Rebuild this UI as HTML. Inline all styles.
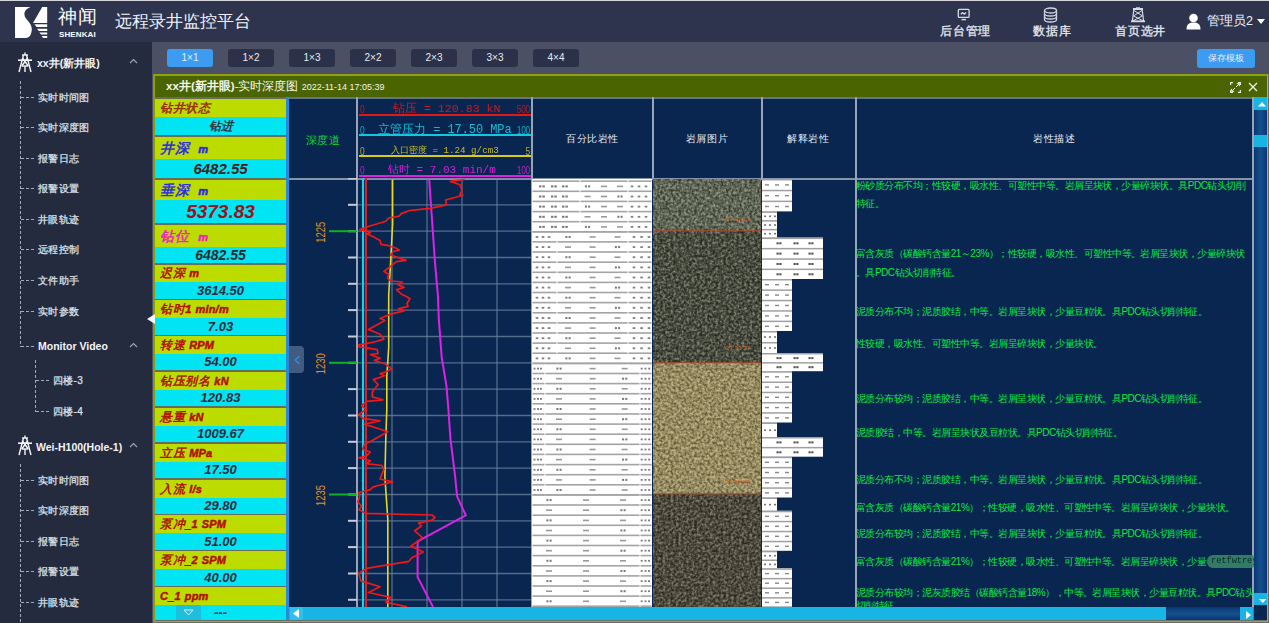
<!DOCTYPE html><html><head><meta charset="utf-8"><style>
*{margin:0;padding:0;box-sizing:border-box}
html,body{width:1269px;height:623px;overflow:hidden;background:#252b3f;font-family:"Liberation Sans",sans-serif}
div,span,svg{position:absolute}
.btn{top:49px;width:46px;height:18px;background:#2b3149;border-radius:3px;color:#e8ecf4;font-size:10px;line-height:18px;text-align:center}
.btn.on{background:#3c9cf2}
.navt{-webkit-text-stroke:0.3px #e6eaf2;color:#e6eaf2;font-size:12px;top:24px;letter-spacing:0.8px;height:14px;line-height:14px;white-space:nowrap}
.si{-webkit-text-stroke:0.25px #dfe3ea;color:#dfe3ea;font-size:10px;letter-spacing:0.3px;white-space:nowrap;line-height:12px;height:12px}
.sb{color:#f2f4f8;font-size:10.5px;font-weight:bold;white-space:nowrap;line-height:12px;height:12px}
.hd{height:1px;background:repeating-linear-gradient(90deg,#a4aab8 0 3px,transparent 3px 5px)}
.vd{width:1px;background:repeating-linear-gradient(180deg,#a4aab8 0 3px,transparent 3px 5px)}
.lab{left:0;width:131px;height:18px;background:#bcdc00;font-style:italic;font-size:12px;line-height:18px;padding-left:5px;color:#a01010;white-space:nowrap;letter-spacing:0.6px}
.val{left:0;width:131px;background:#00e4f4;font-style:italic;font-weight:bold;font-size:13px;text-align:center;color:#2a2a3a;white-space:nowrap}
.ch{color:#e8ecf4;font-size:9.5px;letter-spacing:0.6px;white-space:nowrap;text-align:center}
.desc{color:#08ec3c;font-size:10px;letter-spacing:-0.52px;white-space:nowrap;line-height:12px;height:12px;left:856px}
</style></head><body>
<div style="left:0;top:0;width:1269px;height:42px;background:#2e344e;border-top:1px solid #d4d6dc"></div>
<svg style="left:0;top:0" width="60" height="42" viewBox="0 0 60 42">
<path d="M15 7 H30.5 C26.5 8.5 24 11.5 24.5 15 C25 19.5 31.8 22.5 31.8 29 C31.8 34 29.5 38 26 38 H15 Z" fill="#fff"/>
<path d="M42.2 7 H47.2 V23 H33 Z" fill="#fff"/>
<path d="M34.4 24.2 H47.2 V26.9 H36.6 Z M37 28.7 H47.2 V31 H38.9 Z M39.4 32.5 H47.2 V34.5 H41.1 Z M41.6 35.9 H47.2 V38 H43.3 Z" fill="#fff"/>
</svg>
<div style="left:58px;top:5px;font-size:19px;line-height:24px;color:#fff;font-family:'Liberation Serif',serif;letter-spacing:1px">神闻</div>
<div style="left:59px;top:30px;font-size:8px;line-height:9px;color:#fff;font-weight:bold;letter-spacing:0.1px">SHENKAI</div>
<div style="left:115px;top:11px;font-size:16.5px;line-height:20px;color:#eef2fa;white-space:nowrap">远程录井监控平台</div>
<svg style="left:957px;top:8px" width="14" height="14" viewBox="0 0 14 14" fill="none" stroke="#d8dce6" stroke-width="1.3">
<rect x="1.3" y="1.4" width="10.8" height="8" rx="1"/><path d="M4.5 11.6 H9" stroke-width="1.4"/><path d="M3.8 6.3 L5.6 4.6 L7.2 6.2 L9.2 4.6" stroke-width="1.3"/></svg>
<div class="navt" style="left:940px">后台管理</div>
<svg style="left:1043px;top:7px" width="15" height="16" viewBox="0 0 15 16" fill="none" stroke="#d0d4de" stroke-width="1.3">
<ellipse cx="7.5" cy="3.5" rx="6" ry="2.5"/><path d="M1.5 3.5 V12.5 C1.5 14 4 15 7.5 15 C11 15 13.5 14 13.5 12.5 V3.5"/>
<path d="M1.5 6.5 C1.5 8 4 9 7.5 9 C11 9 13.5 8 13.5 6.5"/><path d="M1.5 9.5 C1.5 11 4 12 7.5 12 C11 12 13.5 11 13.5 9.5"/></svg>
<div class="navt" style="left:1033px">数据库</div>
<svg style="left:1130px;top:7px" width="16" height="16" viewBox="0 0 16 16" fill="none" stroke="#d8dce6" stroke-width="1.2">
<path d="M3 2 H13" stroke-width="2"/><path d="M6 0.8 H10" stroke-width="1"/><path d="M3.8 3 L2.4 14 M12.2 3 L13.6 14"/><path d="M4 3.5 L12.3 8.8 M12 3.5 L3.7 8.8 M3.4 8.8 L13 13.8 M12.6 8.8 L3 13.8" stroke-width="1"/><path d="M1 14.3 H15" stroke-width="1.8"/></svg>
<div class="navt" style="left:1115px">首页选井</div>
<svg style="left:1186px;top:13px" width="15" height="17" viewBox="0 0 15 17"><circle cx="7.5" cy="5" r="4.3" fill="#fff"/><path d="M0.5 16.5 C0.5 11 3.5 9.5 7.5 9.5 C11.5 9.5 14.5 11 14.5 16.5 Z" fill="#fff"/></svg>
<div style="left:1207px;top:13px;font-size:12.5px;line-height:16px;color:#eef2fa;white-space:nowrap">管理员2</div>
<svg style="left:1257px;top:19px" width="8" height="6" viewBox="0 0 8 6"><path d="M0 0 H8 L4 5 Z" fill="#fff"/></svg>
<div style="left:0;top:42px;width:152px;height:581px;background:#252b3f"></div>
<svg style="left:17px;top:52px" width="16" height="21" viewBox="0 0 16 21" fill="none" stroke="#f4f6fa" stroke-width="1.4">
<path d="M8 0.5 V3"/><path d="M5 3 H11"/><path d="M6.5 3 L2 20 M9.5 3 L14 20"/><path d="M1 8.2 H15" stroke-width="1.6"/><path d="M5.5 6 L11.2 14 M10.5 6 L4.8 14"/><path d="M4.8 14 H11.2"/><path d="M8 14 V20"/></svg>
<div class="sb" style="left:37px;top:57px">xx井(新井眼)</div>
<svg style="left:129px;top:58px" width="9" height="6" viewBox="0 0 9 6" fill="none" stroke="#a0a6b4" stroke-width="1.1"><path d="M1 5 L4.5 1.5 L8 5"/></svg>
<div class="vd" style="left:20px;top:81px;height:266px"></div>
<div class="hd" style="left:21px;top:97px;width:15px"></div>
<div class="si" style="left:38px;top:92px">实时时间图</div>
<div class="hd" style="left:21px;top:127px;width:15px"></div>
<div class="si" style="left:38px;top:122px">实时深度图</div>
<div class="hd" style="left:21px;top:158px;width:15px"></div>
<div class="si" style="left:38px;top:153px">报警日志</div>
<div class="hd" style="left:21px;top:188px;width:15px"></div>
<div class="si" style="left:38px;top:183px">报警设置</div>
<div class="hd" style="left:21px;top:219px;width:15px"></div>
<div class="si" style="left:38px;top:214px">井眼轨迹</div>
<div class="hd" style="left:21px;top:249px;width:15px"></div>
<div class="si" style="left:38px;top:244px">远程控制</div>
<div class="hd" style="left:21px;top:280px;width:15px"></div>
<div class="si" style="left:38px;top:275px">文件助手</div>
<div class="hd" style="left:21px;top:311px;width:15px"></div>
<div class="si" style="left:38px;top:306px">实时参数</div>
<div class="hd" style="left:21px;top:346px;width:15px"></div>
<div class="sb" style="left:38px;top:340px">Monitor Video</div>
<svg style="left:129px;top:342px" width="9" height="6" viewBox="0 0 9 6" fill="none" stroke="#a0a6b4" stroke-width="1.1"><path d="M1 5 L4.5 1.5 L8 5"/></svg>
<div class="vd" style="left:35px;top:360px;height:52px"></div>
<div class="hd" style="left:36px;top:380px;width:14px"></div>
<div class="si" style="left:53px;top:375px">四楼-3</div>
<div class="hd" style="left:36px;top:411px;width:14px"></div>
<div class="si" style="left:53px;top:406px">四楼-4</div>
<svg style="left:17px;top:435px" width="16" height="21" viewBox="0 0 16 21" fill="none" stroke="#f4f6fa" stroke-width="1.4">
<path d="M8 0.5 V3"/><path d="M5 3 H11"/><path d="M6.5 3 L2 20 M9.5 3 L14 20"/><path d="M1 8.2 H15" stroke-width="1.6"/><path d="M5.5 6 L11.2 14 M10.5 6 L4.8 14"/><path d="M4.8 14 H11.2"/><path d="M8 14 V20"/></svg>
<div class="sb" style="left:36px;top:441px">Wei-H100(Hole-1)</div>
<svg style="left:129px;top:442px" width="9" height="6" viewBox="0 0 9 6" fill="none" stroke="#a0a6b4" stroke-width="1.1"><path d="M1 5 L4.5 1.5 L8 5"/></svg>
<div class="vd" style="left:20px;top:464px;height:159px"></div>
<div class="hd" style="left:21px;top:479.5px;width:15px"></div>
<div class="si" style="left:38px;top:474.5px">实时时间图</div>
<div class="hd" style="left:21px;top:510px;width:15px"></div>
<div class="si" style="left:38px;top:505px">实时深度图</div>
<div class="hd" style="left:21px;top:540.5px;width:15px"></div>
<div class="si" style="left:38px;top:535.5px">报警日志</div>
<div class="hd" style="left:21px;top:571px;width:15px"></div>
<div class="si" style="left:38px;top:566px">报警设置</div>
<div class="hd" style="left:21px;top:601.5px;width:15px"></div>
<div class="si" style="left:38px;top:596.5px">井眼轨迹</div>
<div style="left:152px;top:42px;width:1117px;height:581px;background:#4b5064"></div>
<div class="btn on" style="left:167px">1×1</div>
<div class="btn" style="left:228px">1×2</div>
<div class="btn" style="left:289px">1×3</div>
<div class="btn" style="left:350px">2×2</div>
<div class="btn" style="left:411px">2×3</div>
<div class="btn" style="left:472px">3×3</div>
<div class="btn" style="left:533px">4×4</div>
<div class="btn on" style="left:1197px;width:58px;height:19px;font-size:8.8px;line-height:19px">保存模板</div>
<div style="left:153px;top:74px;width:1116px;height:549px;background:#6a6c62"></div>
<div style="left:153px;top:74px;width:1115px;height:548px;border-top:2px solid #90a010;border-left:2px solid #8c9c12;border-right:1px solid #b0bc20;border-bottom:1px solid #a0a828;background:#4a6400"></div>
<div style="left:166px;top:79px;font-size:11.6px;line-height:14px;color:#f4f6ea;white-space:nowrap"><b style="position:static">xx井(新井眼)</b>-实时深度图 <span style="position:static;font-size:9px">2022-11-14 17:05:39</span></div>
<svg style="left:1230px;top:82px" width="11" height="11" viewBox="0 0 11 11" fill="none" stroke="#e8ecd8" stroke-width="1.2">
<path d="M0.6 3 V0.6 H3 M8 0.6 H10.4 V3 M10.4 8 V10.4 H8 M3 10.4 H0.6 V8"/><path d="M6 5 L9.2 1.8 M6.8 1.6 H9.4 V4.2 M5 6 L1.8 9.2 M1.6 6.8 V9.4 H4.2" stroke-width="1"/></svg>
<svg style="left:1248px;top:82px" width="10" height="10" viewBox="0 0 10 10" fill="none" stroke="#eef0e4" stroke-width="1.3"><path d="M1 1 L9 9 M9 1 L1 9"/></svg>
<div style="left:155px;top:97px;width:1112px;height:524px;background:#6a7068"></div>
<div style="left:155px;top:97px;width:131px;height:524px;background:#6a6c5a">
<div class="lab" style="top:2px;height:18px;line-height:18px;color:#9a2a10;font-size:12px;-webkit-text-stroke:0.5px #9a2a10">钻井状态</div>
<div class="val" style="top:20px;height:18px;line-height:18px;color:#303838;font-size:12px;font-weight:bold">钻进</div>
<div class="lab" style="top:40px;height:22px;line-height:22px;color:#2828e0;font-size:14px;-webkit-text-stroke:0.5px #2828e0">井深  <b style="position:static;font-size:11px;letter-spacing:0.2px">m</b></div>
<div class="val" style="top:62px;height:19px;line-height:19px;color:#3a2020;font-size:15px;font-weight:bold">6482.55</div>
<div class="lab" style="top:83px;height:20px;line-height:20px;color:#2828e0;font-size:14px;-webkit-text-stroke:0.5px #2828e0">垂深  <b style="position:static;font-size:11px;letter-spacing:0.2px">m</b></div>
<div class="val" style="top:103px;height:23px;line-height:23px;color:#9a1020;font-size:19px;font-weight:bold">5373.83</div>
<div class="lab" style="top:128px;height:22px;line-height:22px;color:#f020c0;font-size:14px;-webkit-text-stroke:0.5px #f020c0">钻位  <b style="position:static;font-size:11px;letter-spacing:0.2px">m</b></div>
<div class="val" style="top:150px;height:16px;line-height:16px;color:#2a2a30;font-size:14px;font-weight:bold">6482.55</div>
<div class="lab" style="top:168px;height:17px;line-height:17px;color:#b01008;font-size:12px;-webkit-text-stroke:0.5px #b01008">迟深 <b style="position:static;font-size:11px;letter-spacing:0.2px">m</b></div>
<div class="val" style="top:185px;height:17px;line-height:17px;color:#2a2a3a;font-size:13px;font-weight:bold">3614.50</div>
<div class="lab" style="top:203px;height:18px;line-height:18px;color:#b01008;font-size:12px;-webkit-text-stroke:0.5px #b01008">钻时<b style="position:static;font-size:11px;letter-spacing:0.2px">1</b> <b style="position:static;font-size:11px;letter-spacing:0.2px">min/m</b></div>
<div class="val" style="top:221px;height:17px;line-height:17px;color:#2a2a3a;font-size:13px;font-weight:bold">7.03</div>
<div class="lab" style="top:239px;height:18px;line-height:18px;color:#b01008;font-size:12px;-webkit-text-stroke:0.5px #b01008">转速 <b style="position:static;font-size:11px;letter-spacing:0.2px">RPM</b></div>
<div class="val" style="top:257px;height:16px;line-height:16px;color:#2a2a3a;font-size:13px;font-weight:bold">54.00</div>
<div class="lab" style="top:275px;height:18px;line-height:18px;color:#b01008;font-size:12px;-webkit-text-stroke:0.5px #b01008">钻压别名 <b style="position:static;font-size:11px;letter-spacing:0.2px">kN</b></div>
<div class="val" style="top:293px;height:16px;line-height:16px;color:#2a2a3a;font-size:13px;font-weight:bold">120.83</div>
<div class="lab" style="top:311px;height:18px;line-height:18px;color:#b01008;font-size:12px;-webkit-text-stroke:0.5px #b01008">悬重 <b style="position:static;font-size:11px;letter-spacing:0.2px">kN</b></div>
<div class="val" style="top:329px;height:16px;line-height:16px;color:#2a2a3a;font-size:13px;font-weight:bold">1009.67</div>
<div class="lab" style="top:347px;height:18px;line-height:18px;color:#b01008;font-size:12px;-webkit-text-stroke:0.5px #b01008">立压 <b style="position:static;font-size:11px;letter-spacing:0.2px">MPa</b></div>
<div class="val" style="top:365px;height:16px;line-height:16px;color:#2a2a3a;font-size:13px;font-weight:bold">17.50</div>
<div class="lab" style="top:383px;height:18px;line-height:18px;color:#b01008;font-size:12px;-webkit-text-stroke:0.5px #b01008">入流 <b style="position:static;font-size:11px;letter-spacing:0.2px">l/s</b></div>
<div class="val" style="top:401px;height:16px;line-height:16px;color:#2a2a3a;font-size:13px;font-weight:bold">29.80</div>
<div class="lab" style="top:418px;height:18px;line-height:18px;color:#b01008;font-size:12px;-webkit-text-stroke:0.5px #b01008">泵冲<b style="position:static;font-size:11px;letter-spacing:0.2px">_1</b> <b style="position:static;font-size:11px;letter-spacing:0.2px">SPM</b></div>
<div class="val" style="top:436px;height:17px;line-height:17px;color:#2a2a3a;font-size:13px;font-weight:bold">51.00</div>
<div class="lab" style="top:454px;height:18px;line-height:18px;color:#b01008;font-size:12px;-webkit-text-stroke:0.5px #b01008">泵冲<b style="position:static;font-size:11px;letter-spacing:0.2px">_2</b> <b style="position:static;font-size:11px;letter-spacing:0.2px">SPM</b></div>
<div class="val" style="top:472px;height:17px;line-height:17px;color:#2a2a3a;font-size:13px;font-weight:bold">40.00</div>
<div class="lab" style="top:490px;height:18px;line-height:18px;color:#b01008;font-size:12px;-webkit-text-stroke:0.5px #b01008"><b style="position:static;font-size:11px;letter-spacing:0.2px">C_1</b> <b style="position:static;font-size:11px;letter-spacing:0.2px">ppm</b></div>
<div class="val" style="top:508px;height:15px;line-height:15px;color:#2a2a3a;font-size:13px;font-weight:bold">---</div>
<div style="left:21px;top:508px;width:25px;height:15px;background:#1cc0dc;border-radius:2px 2px 0 0"></div>
<svg style="left:28px;top:512px" width="11" height="7" viewBox="0 0 11 7" fill="none" stroke="#c8f4fa" stroke-width="1"><path d="M1 1 H10 L5.5 6 Z"/></svg>
</div>
<div style="left:286px;top:97px;width:3px;height:523px;background:#2a88d8"></div>
<div style="left:289px;top:97px;width:964px;height:510px;background:#092650"></div>
<div style="left:289px;top:97px;width:965px;height:2px;background:#647488"></div>
<div style="left:289px;top:178px;width:965px;height:2px;background:#8694aa"></div>
<div style="left:356px;top:97px;width:2px;height:510px;background:#98a4b8"></div>
<div style="left:531px;top:97px;width:2px;height:510px;background:#98a4b8"></div>
<div style="left:855px;top:97px;width:2px;height:510px;background:#98a4b8"></div>
<div style="left:1252px;top:97px;width:2px;height:510px;background:#98a4b8"></div>
<div style="left:652px;top:97px;width:2px;height:83px;background:#98a4b8"></div>
<div style="left:761px;top:97px;width:2px;height:83px;background:#98a4b8"></div>
<div class="ch" style="left:290px;top:134px;width:66px;color:#10d830;font-size:10.5px">深度道</div>
<div class="ch" style="left:533px;top:133px;width:119px">百分比岩性</div>
<div class="ch" style="left:653px;top:133px;width:108px">岩屑图片</div>
<div class="ch" style="left:762px;top:133px;width:93px">解释岩性</div>
<div class="ch" style="left:857px;top:133px;width:395px">岩性描述</div>
<div style="left:359px;top:114px;width:172px;height:2px;background:#e01818"></div>
<div style="left:360px;top:104px;font-size:10.5px;line-height:10px;color:#e01818;opacity:.8;transform:scaleX(0.8);transform-origin:0 0">0</div>
<div style="left:393px;top:103px;font-size:11.6px;line-height:12px;color:#e01818;font-family:'Liberation Mono',monospace;white-space:nowrap;opacity:.92">钻压 = 120.83 kN</div>
<div style="left:470px;width:60px;text-align:right;top:104px;font-size:10.5px;line-height:10px;color:#e01818;opacity:.8;transform:scaleX(0.8);transform-origin:100% 0;letter-spacing:-0.3px">500</div>
<div style="left:359px;top:134px;width:172px;height:2px;background:#10c8e0"></div>
<div style="left:360px;top:125px;font-size:10.5px;line-height:10px;color:#10c8e0;opacity:.8;transform:scaleX(0.8);transform-origin:0 0">0</div>
<div style="left:378px;top:124px;font-size:11.9px;line-height:12px;color:#10c8e0;font-family:'Liberation Mono',monospace;white-space:nowrap;opacity:.92">立管压力 = 17.50 MPa</div>
<div style="left:470px;width:60px;text-align:right;top:125px;font-size:10.5px;line-height:10px;color:#10c8e0;opacity:.8;transform:scaleX(0.8);transform-origin:100% 0;letter-spacing:-0.3px">100</div>
<div style="left:359px;top:155px;width:172px;height:2px;background:#d8c820"></div>
<div style="left:360px;top:146px;font-size:10.5px;line-height:10px;color:#d8c820;opacity:.8;transform:scaleX(0.8);transform-origin:0 0">0</div>
<div style="left:391px;top:145px;font-size:9.2px;line-height:12px;color:#d8c820;font-family:'Liberation Mono',monospace;white-space:nowrap;opacity:.92">入口密度 = 1.24 g/cm3</div>
<div style="left:470px;width:60px;text-align:right;top:146px;font-size:10.5px;line-height:10px;color:#d8c820;opacity:.8;transform:scaleX(0.8);transform-origin:100% 0;letter-spacing:-0.3px">5</div>
<div style="left:359px;top:175px;width:172px;height:2px;background:#e020e0"></div>
<div style="left:360px;top:165px;font-size:10.5px;line-height:10px;color:#e020e0;opacity:.8;transform:scaleX(0.8);transform-origin:0 0">0</div>
<div style="left:388px;top:164px;font-size:11px;line-height:12px;color:#e020e0;font-family:'Liberation Mono',monospace;white-space:nowrap;opacity:.92">钻时 = 7.03 min/m</div>
<div style="left:470px;width:60px;text-align:right;top:165px;font-size:10.5px;line-height:10px;color:#e020e0;opacity:.8;transform:scaleX(0.8);transform-origin:100% 0;letter-spacing:-0.3px">100</div>
<svg style="left:289px;top:178px" width="964" height="429" viewBox="289 178 964 429"><line x1="358" y1="178.5" x2="531" y2="178.5" stroke="#6e82a0" stroke-width="1.3" opacity="0.75"/><line x1="348" y1="178.5" x2="357" y2="178.5" stroke="#c8ccd4" stroke-width="2"/><line x1="358" y1="204.8" x2="531" y2="204.8" stroke="#6e82a0" stroke-width="1.3" opacity="0.75"/><line x1="348" y1="204.8" x2="357" y2="204.8" stroke="#c8ccd4" stroke-width="2"/><line x1="358" y1="231.2" x2="531" y2="231.2" stroke="#6e82a0" stroke-width="1.3" opacity="0.75"/><line x1="348" y1="231.2" x2="357" y2="231.2" stroke="#c8ccd4" stroke-width="2"/><line x1="358" y1="257.5" x2="531" y2="257.5" stroke="#6e82a0" stroke-width="1.3" opacity="0.75"/><line x1="348" y1="257.5" x2="357" y2="257.5" stroke="#c8ccd4" stroke-width="2"/><line x1="358" y1="283.8" x2="531" y2="283.8" stroke="#6e82a0" stroke-width="1.3" opacity="0.75"/><line x1="348" y1="283.8" x2="357" y2="283.8" stroke="#c8ccd4" stroke-width="2"/><line x1="358" y1="310.1" x2="531" y2="310.1" stroke="#6e82a0" stroke-width="1.3" opacity="0.75"/><line x1="348" y1="310.1" x2="357" y2="310.1" stroke="#c8ccd4" stroke-width="2"/><line x1="358" y1="336.5" x2="531" y2="336.5" stroke="#6e82a0" stroke-width="1.3" opacity="0.75"/><line x1="348" y1="336.5" x2="357" y2="336.5" stroke="#c8ccd4" stroke-width="2"/><line x1="358" y1="362.8" x2="531" y2="362.8" stroke="#6e82a0" stroke-width="1.3" opacity="0.75"/><line x1="348" y1="362.8" x2="357" y2="362.8" stroke="#c8ccd4" stroke-width="2"/><line x1="358" y1="389.1" x2="531" y2="389.1" stroke="#6e82a0" stroke-width="1.3" opacity="0.75"/><line x1="348" y1="389.1" x2="357" y2="389.1" stroke="#c8ccd4" stroke-width="2"/><line x1="358" y1="415.5" x2="531" y2="415.5" stroke="#6e82a0" stroke-width="1.3" opacity="0.75"/><line x1="348" y1="415.5" x2="357" y2="415.5" stroke="#c8ccd4" stroke-width="2"/><line x1="358" y1="441.8" x2="531" y2="441.8" stroke="#6e82a0" stroke-width="1.3" opacity="0.75"/><line x1="348" y1="441.8" x2="357" y2="441.8" stroke="#c8ccd4" stroke-width="2"/><line x1="358" y1="468.1" x2="531" y2="468.1" stroke="#6e82a0" stroke-width="1.3" opacity="0.75"/><line x1="348" y1="468.1" x2="357" y2="468.1" stroke="#c8ccd4" stroke-width="2"/><line x1="358" y1="494.5" x2="531" y2="494.5" stroke="#6e82a0" stroke-width="1.3" opacity="0.75"/><line x1="348" y1="494.5" x2="357" y2="494.5" stroke="#c8ccd4" stroke-width="2"/><line x1="358" y1="520.8" x2="531" y2="520.8" stroke="#6e82a0" stroke-width="1.3" opacity="0.75"/><line x1="348" y1="520.8" x2="357" y2="520.8" stroke="#c8ccd4" stroke-width="2"/><line x1="358" y1="547.1" x2="531" y2="547.1" stroke="#6e82a0" stroke-width="1.3" opacity="0.75"/><line x1="348" y1="547.1" x2="357" y2="547.1" stroke="#c8ccd4" stroke-width="2"/><line x1="358" y1="573.5" x2="531" y2="573.5" stroke="#6e82a0" stroke-width="1.3" opacity="0.75"/><line x1="348" y1="573.5" x2="357" y2="573.5" stroke="#c8ccd4" stroke-width="2"/><line x1="358" y1="599.8" x2="531" y2="599.8" stroke="#6e82a0" stroke-width="1.3" opacity="0.75"/><line x1="348" y1="599.8" x2="357" y2="599.8" stroke="#c8ccd4" stroke-width="2"/><line x1="392" y1="178" x2="392" y2="607" stroke="#6e82a0" stroke-width="1.3" opacity="0.75"/><line x1="427" y1="178" x2="427" y2="607" stroke="#6e82a0" stroke-width="1.3" opacity="0.75"/><line x1="462" y1="178" x2="462" y2="607" stroke="#6e82a0" stroke-width="1.3" opacity="0.75"/><line x1="497" y1="178" x2="497" y2="607" stroke="#6e82a0" stroke-width="1.3" opacity="0.75"/><line x1="329" y1="231.2" x2="357" y2="231.2" stroke="#10b020" stroke-width="2"/><text x="0" y="0" transform="translate(325,232.2) rotate(-90)" text-anchor="middle" font-size="13" fill="#e0901a" font-family="Liberation Sans" textLength="21" lengthAdjust="spacingAndGlyphs">1225</text><line x1="329" y1="362.8" x2="357" y2="362.8" stroke="#10b020" stroke-width="2"/><text x="0" y="0" transform="translate(325,363.8) rotate(-90)" text-anchor="middle" font-size="13" fill="#e0901a" font-family="Liberation Sans" textLength="21" lengthAdjust="spacingAndGlyphs">1230</text><line x1="329" y1="494.5" x2="357" y2="494.5" stroke="#10b020" stroke-width="2"/><text x="0" y="0" transform="translate(325,495.5) rotate(-90)" text-anchor="middle" font-size="13" fill="#e0901a" font-family="Liberation Sans" textLength="21" lengthAdjust="spacingAndGlyphs">1235</text><line x1="363" y1="178" x2="363" y2="607" stroke="#18d0e8" stroke-width="2"/><line x1="366" y1="178" x2="366" y2="607" stroke="#d82020" stroke-width="2"/><polyline points="392.6,179.5 392.6,224.0 391.6,243.4 390.6,262.7 388.7,295.5 388.7,347.8 386.8,376.7 386.8,409.5 385.8,438.5 384.9,477.0 387.8,519.3 387.8,606.9" fill="none" stroke="#e8d820" stroke-width="1.6"/><polyline points="429.2,179.5 431.1,206.8 433.0,233.8 435.0,262.7 437.9,295.5 438.8,318.9 441.7,357.4 446.5,386.3 448.4,409.5 450.4,438.5 455.2,477.0 457.1,496.3 465.8,515.4 417.6,541.4 417.6,577.1 433.0,606.9" fill="none" stroke="#e020e8" stroke-width="2"/><polyline points="464.8,179.5 450.4,181.4 460.0,184.7 462.0,190.4 460.0,194.3 462.9,195.3 445.6,200.0 446.5,204.9 430.1,208.4 409.0,210.7 401.2,213.6 399.3,216.1 388.7,218.0 385.8,221.3 366.6,227.0 359.8,229.6 366.6,230.9 368.5,231.5 370.4,232.8 366.6,233.8 373.3,236.7 380.0,240.5 381.0,244.4 388.7,245.7 396.4,248.3 399.3,250.2 393.5,251.5 390.6,255.0 406.0,260.4 396.4,261.7 391.6,265.6 383.9,271.4 388.7,274.3 387.6,278.1 390.6,281.0 402.2,282.0 398.4,284.9 404.1,287.4 396.4,289.7 401.2,293.9 407.0,296.7 409.9,298.7 407.0,303.5 408.0,306.4 398.4,308.9 404.1,310.8 390.6,314.1 380.0,318.5 384.9,320.4 368.5,329.5 380.0,334.3 383.9,339.1 374.3,342.0 358.9,344.9 358.9,346.8 366.6,347.8 377.2,349.7 378.1,353.6 370.4,354.5 380.0,358.4 374.3,360.3 385.8,364.2 391.6,369.0 385.8,371.9 380.0,373.8 384.9,375.7 373.3,379.6 378.1,384.4 372.3,392.1 372.3,396.9 382.9,399.8 366.6,401.4 361.7,405.6 366.6,409.6 362.7,411.6 358.9,414.5 362.7,418.3 380.0,420.8 364.6,424.1 387.8,431.8 372.3,440.5 364.6,444.3 362.7,449.1 370.4,452.0 366.6,455.9 358.9,457.8 370.4,460.7 366.6,463.6 382.0,465.5 383.9,469.4 380.0,479.0 392.6,481.9 373.3,486.7 370.4,489.6 358.9,492.5 359.8,496.0 357.9,502.1 361.7,506.0 358.9,509.8 365.6,513.3 432.1,515.0 435.0,517.3 432.1,520.2 418.6,523.1 421.5,526.0 414.7,530.8 422.4,537.6 410.9,546.2 423.4,552.0 411.8,557.8 409.0,561.3 366.6,568.4 358.9,573.2 360.8,580.9 380.0,586.7 368.5,592.5 390.6,597.3 385.8,602.1 407.0,606.9" fill="none" stroke="#f01818" stroke-width="1.7" stroke-linejoin="round"/></svg>
<div style="left:289px;top:346px;width:15px;height:27px;background:#4a6284;border-radius:0 4px 4px 0;opacity:.9"></div>
<svg style="left:294px;top:354.5px" width="7" height="10" viewBox="0 0 7 10" fill="none" stroke="#2a90e0" stroke-width="1.4"><path d="M5.5 1 L1.2 5 L5.5 9"/></svg>
<svg style="left:532px;top:179px" width="120" height="428" viewBox="532 179 120 428"><rect x="532" y="179" width="120" height="428" fill="#ffffff"/><rect x="532.5" y="180.4" width="47" height="1.6" fill="#a4a4a4"/><rect x="580.5" y="180.4" width="47" height="1.6" fill="#a4a4a4"/><rect x="628.5" y="180.4" width="23" height="1.6" fill="#a4a4a4"/><rect x="539.0" y="185.4" width="2.4" height="2" fill="#787878"/><rect x="542.4" y="185.4" width="2.4" height="2" fill="#787878"/><rect x="551.0" y="185.4" width="2.4" height="2" fill="#787878"/><rect x="554.4" y="185.4" width="2.4" height="2" fill="#787878"/><rect x="562.0" y="185.4" width="2.4" height="2" fill="#787878"/><rect x="565.4" y="185.4" width="2.4" height="2" fill="#787878"/><rect x="584.9" y="185.4" width="2" height="2" fill="#777"/><rect x="588.1" y="185.4" width="2" height="2" fill="#777"/><rect x="601.0" y="185.6" width="6" height="1.6" fill="#9a9a9a"/><rect x="617.0" y="185.6" width="6" height="1.6" fill="#9a9a9a"/><rect x="630.7" y="185.5" width="2.6" height="1.8" fill="#808080"/><rect x="637.7" y="185.5" width="2.6" height="1.8" fill="#808080"/><rect x="644.7" y="185.5" width="2.6" height="1.8" fill="#808080"/><rect x="532.5" y="190.5" width="47" height="1.6" fill="#a4a4a4"/><rect x="580.5" y="190.5" width="47" height="1.6" fill="#a4a4a4"/><rect x="628.5" y="190.5" width="23" height="1.6" fill="#a4a4a4"/><rect x="539.0" y="195.5" width="2.4" height="2" fill="#787878"/><rect x="542.4" y="195.5" width="2.4" height="2" fill="#787878"/><rect x="551.0" y="195.5" width="2.4" height="2" fill="#787878"/><rect x="554.4" y="195.5" width="2.4" height="2" fill="#787878"/><rect x="562.0" y="195.5" width="2.4" height="2" fill="#787878"/><rect x="565.4" y="195.5" width="2.4" height="2" fill="#787878"/><rect x="584.5" y="195.7" width="6" height="1.6" fill="#9a9a9a"/><rect x="601.0" y="195.7" width="6" height="1.6" fill="#9a9a9a"/><rect x="617.4" y="195.5" width="2" height="2" fill="#777"/><rect x="620.6" y="195.5" width="2" height="2" fill="#777"/><rect x="630.7" y="195.6" width="2.6" height="1.8" fill="#808080"/><rect x="637.7" y="195.6" width="2.6" height="1.8" fill="#808080"/><rect x="644.7" y="195.6" width="2.6" height="1.8" fill="#808080"/><rect x="532.5" y="200.6" width="47" height="1.6" fill="#a4a4a4"/><rect x="580.5" y="200.6" width="47" height="1.6" fill="#a4a4a4"/><rect x="628.5" y="200.6" width="23" height="1.6" fill="#a4a4a4"/><rect x="539.0" y="205.6" width="2.4" height="2" fill="#787878"/><rect x="542.4" y="205.6" width="2.4" height="2" fill="#787878"/><rect x="551.0" y="205.6" width="2.4" height="2" fill="#787878"/><rect x="554.4" y="205.6" width="2.4" height="2" fill="#787878"/><rect x="562.0" y="205.6" width="2.4" height="2" fill="#787878"/><rect x="565.4" y="205.6" width="2.4" height="2" fill="#787878"/><rect x="584.9" y="205.6" width="2" height="2" fill="#777"/><rect x="588.1" y="205.6" width="2" height="2" fill="#777"/><rect x="601.0" y="205.8" width="6" height="1.6" fill="#9a9a9a"/><rect x="617.0" y="205.8" width="6" height="1.6" fill="#9a9a9a"/><rect x="630.7" y="205.7" width="2.6" height="1.8" fill="#808080"/><rect x="637.7" y="205.7" width="2.6" height="1.8" fill="#808080"/><rect x="644.7" y="205.7" width="2.6" height="1.8" fill="#808080"/><rect x="532.5" y="210.8" width="47" height="1.6" fill="#a4a4a4"/><rect x="580.5" y="210.8" width="47" height="1.6" fill="#a4a4a4"/><rect x="628.5" y="210.8" width="23" height="1.6" fill="#a4a4a4"/><rect x="539.0" y="215.8" width="2.4" height="2" fill="#787878"/><rect x="542.4" y="215.8" width="2.4" height="2" fill="#787878"/><rect x="551.0" y="215.8" width="2.4" height="2" fill="#787878"/><rect x="554.4" y="215.8" width="2.4" height="2" fill="#787878"/><rect x="562.0" y="215.8" width="2.4" height="2" fill="#787878"/><rect x="565.4" y="215.8" width="2.4" height="2" fill="#787878"/><rect x="584.5" y="216.0" width="6" height="1.6" fill="#9a9a9a"/><rect x="601.0" y="216.0" width="6" height="1.6" fill="#9a9a9a"/><rect x="617.4" y="215.8" width="2" height="2" fill="#777"/><rect x="620.6" y="215.8" width="2" height="2" fill="#777"/><rect x="630.7" y="215.9" width="2.6" height="1.8" fill="#808080"/><rect x="637.7" y="215.9" width="2.6" height="1.8" fill="#808080"/><rect x="644.7" y="215.9" width="2.6" height="1.8" fill="#808080"/><rect x="532.5" y="220.9" width="47" height="1.6" fill="#a4a4a4"/><rect x="580.5" y="220.9" width="47" height="1.6" fill="#a4a4a4"/><rect x="628.5" y="220.9" width="23" height="1.6" fill="#a4a4a4"/><rect x="539.0" y="225.9" width="2.4" height="2" fill="#787878"/><rect x="542.4" y="225.9" width="2.4" height="2" fill="#787878"/><rect x="551.0" y="225.9" width="2.4" height="2" fill="#787878"/><rect x="554.4" y="225.9" width="2.4" height="2" fill="#787878"/><rect x="562.0" y="225.9" width="2.4" height="2" fill="#787878"/><rect x="565.4" y="225.9" width="2.4" height="2" fill="#787878"/><rect x="584.9" y="225.9" width="2" height="2" fill="#777"/><rect x="588.1" y="225.9" width="2" height="2" fill="#777"/><rect x="601.0" y="226.1" width="6" height="1.6" fill="#9a9a9a"/><rect x="617.0" y="226.1" width="6" height="1.6" fill="#9a9a9a"/><rect x="630.7" y="226.0" width="2.6" height="1.8" fill="#808080"/><rect x="637.7" y="226.0" width="2.6" height="1.8" fill="#808080"/><rect x="644.7" y="226.0" width="2.6" height="1.8" fill="#808080"/><rect x="532.5" y="231.0" width="47" height="1.6" fill="#a4a4a4"/><rect x="580.5" y="231.0" width="47" height="1.6" fill="#a4a4a4"/><rect x="628.5" y="231.0" width="23" height="1.6" fill="#a4a4a4"/><rect x="532.5" y="231.0" width="24" height="1.6" fill="#a4a4a4"/><rect x="557.5" y="231.0" width="70" height="1.6" fill="#a4a4a4"/><rect x="628.5" y="231.0" width="23" height="1.6" fill="#a4a4a4"/><rect x="535.7" y="236.1" width="2.6" height="1.8" fill="#808080"/><rect x="541.7" y="236.1" width="2.6" height="1.8" fill="#808080"/><rect x="547.7" y="236.1" width="2.6" height="1.8" fill="#808080"/><rect x="565.4" y="236.0" width="2" height="2" fill="#777"/><rect x="568.6" y="236.0" width="2" height="2" fill="#777"/><rect x="589.6" y="236.2" width="6" height="1.6" fill="#9a9a9a"/><rect x="614.5" y="236.2" width="6" height="1.6" fill="#9a9a9a"/><rect x="632.7" y="236.1" width="2.6" height="1.8" fill="#808080"/><rect x="640.3" y="236.1" width="2.6" height="1.8" fill="#808080"/><rect x="647.7" y="236.1" width="2.6" height="1.8" fill="#808080"/><rect x="532.5" y="241.1" width="24" height="1.6" fill="#a4a4a4"/><rect x="557.5" y="241.1" width="70" height="1.6" fill="#a4a4a4"/><rect x="628.5" y="241.1" width="23" height="1.6" fill="#a4a4a4"/><rect x="535.7" y="246.2" width="2.6" height="1.8" fill="#808080"/><rect x="541.7" y="246.2" width="2.6" height="1.8" fill="#808080"/><rect x="547.7" y="246.2" width="2.6" height="1.8" fill="#808080"/><rect x="565.0" y="246.3" width="6" height="1.6" fill="#9a9a9a"/><rect x="589.6" y="246.3" width="6" height="1.6" fill="#9a9a9a"/><rect x="614.9" y="246.1" width="2" height="2" fill="#777"/><rect x="618.1" y="246.1" width="2" height="2" fill="#777"/><rect x="632.7" y="246.2" width="2.6" height="1.8" fill="#808080"/><rect x="640.3" y="246.2" width="2.6" height="1.8" fill="#808080"/><rect x="647.7" y="246.2" width="2.6" height="1.8" fill="#808080"/><rect x="532.5" y="251.2" width="24" height="1.6" fill="#a4a4a4"/><rect x="557.5" y="251.2" width="70" height="1.6" fill="#a4a4a4"/><rect x="628.5" y="251.2" width="23" height="1.6" fill="#a4a4a4"/><rect x="535.7" y="256.3" width="2.6" height="1.8" fill="#808080"/><rect x="541.7" y="256.3" width="2.6" height="1.8" fill="#808080"/><rect x="547.7" y="256.3" width="2.6" height="1.8" fill="#808080"/><rect x="565.4" y="256.2" width="2" height="2" fill="#777"/><rect x="568.6" y="256.2" width="2" height="2" fill="#777"/><rect x="589.6" y="256.4" width="6" height="1.6" fill="#9a9a9a"/><rect x="614.5" y="256.4" width="6" height="1.6" fill="#9a9a9a"/><rect x="632.7" y="256.3" width="2.6" height="1.8" fill="#808080"/><rect x="640.3" y="256.3" width="2.6" height="1.8" fill="#808080"/><rect x="647.7" y="256.3" width="2.6" height="1.8" fill="#808080"/><rect x="532.5" y="261.4" width="24" height="1.6" fill="#a4a4a4"/><rect x="557.5" y="261.4" width="70" height="1.6" fill="#a4a4a4"/><rect x="628.5" y="261.4" width="23" height="1.6" fill="#a4a4a4"/><rect x="535.7" y="266.5" width="2.6" height="1.8" fill="#808080"/><rect x="541.7" y="266.5" width="2.6" height="1.8" fill="#808080"/><rect x="547.7" y="266.5" width="2.6" height="1.8" fill="#808080"/><rect x="565.0" y="266.6" width="6" height="1.6" fill="#9a9a9a"/><rect x="589.6" y="266.6" width="6" height="1.6" fill="#9a9a9a"/><rect x="614.9" y="266.4" width="2" height="2" fill="#777"/><rect x="618.1" y="266.4" width="2" height="2" fill="#777"/><rect x="632.7" y="266.5" width="2.6" height="1.8" fill="#808080"/><rect x="640.3" y="266.5" width="2.6" height="1.8" fill="#808080"/><rect x="647.7" y="266.5" width="2.6" height="1.8" fill="#808080"/><rect x="532.5" y="271.5" width="24" height="1.6" fill="#a4a4a4"/><rect x="557.5" y="271.5" width="70" height="1.6" fill="#a4a4a4"/><rect x="628.5" y="271.5" width="23" height="1.6" fill="#a4a4a4"/><rect x="535.7" y="276.6" width="2.6" height="1.8" fill="#808080"/><rect x="541.7" y="276.6" width="2.6" height="1.8" fill="#808080"/><rect x="547.7" y="276.6" width="2.6" height="1.8" fill="#808080"/><rect x="565.4" y="276.5" width="2" height="2" fill="#777"/><rect x="568.6" y="276.5" width="2" height="2" fill="#777"/><rect x="589.6" y="276.7" width="6" height="1.6" fill="#9a9a9a"/><rect x="614.5" y="276.7" width="6" height="1.6" fill="#9a9a9a"/><rect x="632.7" y="276.6" width="2.6" height="1.8" fill="#808080"/><rect x="640.3" y="276.6" width="2.6" height="1.8" fill="#808080"/><rect x="647.7" y="276.6" width="2.6" height="1.8" fill="#808080"/><rect x="532.5" y="281.6" width="24" height="1.6" fill="#a4a4a4"/><rect x="557.5" y="281.6" width="70" height="1.6" fill="#a4a4a4"/><rect x="628.5" y="281.6" width="23" height="1.6" fill="#a4a4a4"/><rect x="535.7" y="286.7" width="2.6" height="1.8" fill="#808080"/><rect x="541.7" y="286.7" width="2.6" height="1.8" fill="#808080"/><rect x="547.7" y="286.7" width="2.6" height="1.8" fill="#808080"/><rect x="565.0" y="286.8" width="6" height="1.6" fill="#9a9a9a"/><rect x="589.6" y="286.8" width="6" height="1.6" fill="#9a9a9a"/><rect x="614.9" y="286.6" width="2" height="2" fill="#777"/><rect x="618.1" y="286.6" width="2" height="2" fill="#777"/><rect x="632.7" y="286.7" width="2.6" height="1.8" fill="#808080"/><rect x="640.3" y="286.7" width="2.6" height="1.8" fill="#808080"/><rect x="647.7" y="286.7" width="2.6" height="1.8" fill="#808080"/><rect x="532.5" y="291.7" width="24" height="1.6" fill="#a4a4a4"/><rect x="557.5" y="291.7" width="70" height="1.6" fill="#a4a4a4"/><rect x="628.5" y="291.7" width="23" height="1.6" fill="#a4a4a4"/><rect x="535.7" y="296.8" width="2.6" height="1.8" fill="#808080"/><rect x="541.7" y="296.8" width="2.6" height="1.8" fill="#808080"/><rect x="547.7" y="296.8" width="2.6" height="1.8" fill="#808080"/><rect x="565.4" y="296.7" width="2" height="2" fill="#777"/><rect x="568.6" y="296.7" width="2" height="2" fill="#777"/><rect x="589.6" y="296.9" width="6" height="1.6" fill="#9a9a9a"/><rect x="614.5" y="296.9" width="6" height="1.6" fill="#9a9a9a"/><rect x="632.7" y="296.8" width="2.6" height="1.8" fill="#808080"/><rect x="640.3" y="296.8" width="2.6" height="1.8" fill="#808080"/><rect x="647.7" y="296.8" width="2.6" height="1.8" fill="#808080"/><rect x="532.5" y="301.8" width="24" height="1.6" fill="#a4a4a4"/><rect x="557.5" y="301.8" width="70" height="1.6" fill="#a4a4a4"/><rect x="628.5" y="301.8" width="23" height="1.6" fill="#a4a4a4"/><rect x="535.7" y="306.9" width="2.6" height="1.8" fill="#808080"/><rect x="541.7" y="306.9" width="2.6" height="1.8" fill="#808080"/><rect x="547.7" y="306.9" width="2.6" height="1.8" fill="#808080"/><rect x="565.0" y="307.0" width="6" height="1.6" fill="#9a9a9a"/><rect x="589.6" y="307.0" width="6" height="1.6" fill="#9a9a9a"/><rect x="614.9" y="306.8" width="2" height="2" fill="#777"/><rect x="618.1" y="306.8" width="2" height="2" fill="#777"/><rect x="632.7" y="306.9" width="2.6" height="1.8" fill="#808080"/><rect x="640.3" y="306.9" width="2.6" height="1.8" fill="#808080"/><rect x="647.7" y="306.9" width="2.6" height="1.8" fill="#808080"/><rect x="532.5" y="312.0" width="24" height="1.6" fill="#a4a4a4"/><rect x="557.5" y="312.0" width="70" height="1.6" fill="#a4a4a4"/><rect x="628.5" y="312.0" width="23" height="1.6" fill="#a4a4a4"/><rect x="535.7" y="317.1" width="2.6" height="1.8" fill="#808080"/><rect x="541.7" y="317.1" width="2.6" height="1.8" fill="#808080"/><rect x="547.7" y="317.1" width="2.6" height="1.8" fill="#808080"/><rect x="565.4" y="317.0" width="2" height="2" fill="#777"/><rect x="568.6" y="317.0" width="2" height="2" fill="#777"/><rect x="589.6" y="317.2" width="6" height="1.6" fill="#9a9a9a"/><rect x="614.5" y="317.2" width="6" height="1.6" fill="#9a9a9a"/><rect x="632.7" y="317.1" width="2.6" height="1.8" fill="#808080"/><rect x="640.3" y="317.1" width="2.6" height="1.8" fill="#808080"/><rect x="647.7" y="317.1" width="2.6" height="1.8" fill="#808080"/><rect x="532.5" y="322.1" width="24" height="1.6" fill="#a4a4a4"/><rect x="557.5" y="322.1" width="70" height="1.6" fill="#a4a4a4"/><rect x="628.5" y="322.1" width="23" height="1.6" fill="#a4a4a4"/><rect x="535.7" y="327.2" width="2.6" height="1.8" fill="#808080"/><rect x="541.7" y="327.2" width="2.6" height="1.8" fill="#808080"/><rect x="547.7" y="327.2" width="2.6" height="1.8" fill="#808080"/><rect x="565.0" y="327.3" width="6" height="1.6" fill="#9a9a9a"/><rect x="589.6" y="327.3" width="6" height="1.6" fill="#9a9a9a"/><rect x="614.9" y="327.1" width="2" height="2" fill="#777"/><rect x="618.1" y="327.1" width="2" height="2" fill="#777"/><rect x="632.7" y="327.2" width="2.6" height="1.8" fill="#808080"/><rect x="640.3" y="327.2" width="2.6" height="1.8" fill="#808080"/><rect x="647.7" y="327.2" width="2.6" height="1.8" fill="#808080"/><rect x="532.5" y="332.2" width="24" height="1.6" fill="#a4a4a4"/><rect x="557.5" y="332.2" width="70" height="1.6" fill="#a4a4a4"/><rect x="628.5" y="332.2" width="23" height="1.6" fill="#a4a4a4"/><rect x="535.7" y="337.3" width="2.6" height="1.8" fill="#808080"/><rect x="541.7" y="337.3" width="2.6" height="1.8" fill="#808080"/><rect x="547.7" y="337.3" width="2.6" height="1.8" fill="#808080"/><rect x="565.4" y="337.2" width="2" height="2" fill="#777"/><rect x="568.6" y="337.2" width="2" height="2" fill="#777"/><rect x="589.6" y="337.4" width="6" height="1.6" fill="#9a9a9a"/><rect x="614.5" y="337.4" width="6" height="1.6" fill="#9a9a9a"/><rect x="632.7" y="337.3" width="2.6" height="1.8" fill="#808080"/><rect x="640.3" y="337.3" width="2.6" height="1.8" fill="#808080"/><rect x="647.7" y="337.3" width="2.6" height="1.8" fill="#808080"/><rect x="532.5" y="342.3" width="24" height="1.6" fill="#a4a4a4"/><rect x="557.5" y="342.3" width="70" height="1.6" fill="#a4a4a4"/><rect x="628.5" y="342.3" width="23" height="1.6" fill="#a4a4a4"/><rect x="535.7" y="347.4" width="2.6" height="1.8" fill="#808080"/><rect x="541.7" y="347.4" width="2.6" height="1.8" fill="#808080"/><rect x="547.7" y="347.4" width="2.6" height="1.8" fill="#808080"/><rect x="565.0" y="347.5" width="6" height="1.6" fill="#9a9a9a"/><rect x="589.6" y="347.5" width="6" height="1.6" fill="#9a9a9a"/><rect x="614.9" y="347.3" width="2" height="2" fill="#777"/><rect x="618.1" y="347.3" width="2" height="2" fill="#777"/><rect x="632.7" y="347.4" width="2.6" height="1.8" fill="#808080"/><rect x="640.3" y="347.4" width="2.6" height="1.8" fill="#808080"/><rect x="647.7" y="347.4" width="2.6" height="1.8" fill="#808080"/><rect x="532.5" y="352.4" width="24" height="1.6" fill="#a4a4a4"/><rect x="557.5" y="352.4" width="70" height="1.6" fill="#a4a4a4"/><rect x="628.5" y="352.4" width="23" height="1.6" fill="#a4a4a4"/><rect x="535.7" y="357.5" width="2.6" height="1.8" fill="#808080"/><rect x="541.7" y="357.5" width="2.6" height="1.8" fill="#808080"/><rect x="547.7" y="357.5" width="2.6" height="1.8" fill="#808080"/><rect x="565.4" y="357.4" width="2" height="2" fill="#777"/><rect x="568.6" y="357.4" width="2" height="2" fill="#777"/><rect x="589.6" y="357.6" width="6" height="1.6" fill="#9a9a9a"/><rect x="614.5" y="357.6" width="6" height="1.6" fill="#9a9a9a"/><rect x="632.7" y="357.5" width="2.6" height="1.8" fill="#808080"/><rect x="640.3" y="357.5" width="2.6" height="1.8" fill="#808080"/><rect x="647.7" y="357.5" width="2.6" height="1.8" fill="#808080"/><rect x="532.5" y="362.6" width="24" height="1.6" fill="#a4a4a4"/><rect x="557.5" y="362.6" width="70" height="1.6" fill="#a4a4a4"/><rect x="628.5" y="362.6" width="23" height="1.6" fill="#a4a4a4"/><rect x="532.5" y="362.6" width="12" height="1.6" fill="#a4a4a4"/><rect x="545.5" y="362.6" width="94" height="1.6" fill="#a4a4a4"/><rect x="640.5" y="362.6" width="11" height="1.6" fill="#a4a4a4"/><rect x="533.5" y="367.7" width="2" height="1.8" fill="#808080"/><rect x="537.0" y="367.7" width="2" height="1.8" fill="#808080"/><rect x="540.0" y="367.7" width="2" height="1.8" fill="#808080"/><rect x="556.4" y="367.6" width="2" height="2" fill="#777"/><rect x="559.6" y="367.6" width="2" height="2" fill="#777"/><rect x="589.6" y="367.8" width="6" height="1.6" fill="#9a9a9a"/><rect x="621.7" y="367.8" width="6" height="1.6" fill="#9a9a9a"/><rect x="640.7" y="367.7" width="2" height="1.8" fill="#808080"/><rect x="644.5" y="367.7" width="2" height="1.8" fill="#808080"/><rect x="648.2" y="367.7" width="2" height="1.8" fill="#808080"/><rect x="532.5" y="372.7" width="12" height="1.6" fill="#a4a4a4"/><rect x="545.5" y="372.7" width="94" height="1.6" fill="#a4a4a4"/><rect x="640.5" y="372.7" width="11" height="1.6" fill="#a4a4a4"/><rect x="533.5" y="377.8" width="2" height="1.8" fill="#808080"/><rect x="537.0" y="377.8" width="2" height="1.8" fill="#808080"/><rect x="540.0" y="377.8" width="2" height="1.8" fill="#808080"/><rect x="556.0" y="377.9" width="6" height="1.6" fill="#9a9a9a"/><rect x="589.6" y="377.9" width="6" height="1.6" fill="#9a9a9a"/><rect x="622.1" y="377.7" width="2" height="2" fill="#777"/><rect x="625.3" y="377.7" width="2" height="2" fill="#777"/><rect x="640.7" y="377.8" width="2" height="1.8" fill="#808080"/><rect x="644.5" y="377.8" width="2" height="1.8" fill="#808080"/><rect x="648.2" y="377.8" width="2" height="1.8" fill="#808080"/><rect x="532.5" y="382.8" width="12" height="1.6" fill="#a4a4a4"/><rect x="545.5" y="382.8" width="94" height="1.6" fill="#a4a4a4"/><rect x="640.5" y="382.8" width="11" height="1.6" fill="#a4a4a4"/><rect x="533.5" y="387.9" width="2" height="1.8" fill="#808080"/><rect x="537.0" y="387.9" width="2" height="1.8" fill="#808080"/><rect x="540.0" y="387.9" width="2" height="1.8" fill="#808080"/><rect x="556.4" y="387.8" width="2" height="2" fill="#777"/><rect x="559.6" y="387.8" width="2" height="2" fill="#777"/><rect x="589.6" y="388.0" width="6" height="1.6" fill="#9a9a9a"/><rect x="621.7" y="388.0" width="6" height="1.6" fill="#9a9a9a"/><rect x="640.7" y="387.9" width="2" height="1.8" fill="#808080"/><rect x="644.5" y="387.9" width="2" height="1.8" fill="#808080"/><rect x="648.2" y="387.9" width="2" height="1.8" fill="#808080"/><rect x="532.5" y="392.9" width="12" height="1.6" fill="#a4a4a4"/><rect x="545.5" y="392.9" width="94" height="1.6" fill="#a4a4a4"/><rect x="640.5" y="392.9" width="11" height="1.6" fill="#a4a4a4"/><rect x="533.5" y="398.0" width="2" height="1.8" fill="#808080"/><rect x="537.0" y="398.0" width="2" height="1.8" fill="#808080"/><rect x="540.0" y="398.0" width="2" height="1.8" fill="#808080"/><rect x="556.0" y="398.1" width="6" height="1.6" fill="#9a9a9a"/><rect x="589.6" y="398.1" width="6" height="1.6" fill="#9a9a9a"/><rect x="622.1" y="397.9" width="2" height="2" fill="#777"/><rect x="625.3" y="397.9" width="2" height="2" fill="#777"/><rect x="640.7" y="398.0" width="2" height="1.8" fill="#808080"/><rect x="644.5" y="398.0" width="2" height="1.8" fill="#808080"/><rect x="648.2" y="398.0" width="2" height="1.8" fill="#808080"/><rect x="532.5" y="403.0" width="12" height="1.6" fill="#a4a4a4"/><rect x="545.5" y="403.0" width="94" height="1.6" fill="#a4a4a4"/><rect x="640.5" y="403.0" width="11" height="1.6" fill="#a4a4a4"/><rect x="533.5" y="408.1" width="2" height="1.8" fill="#808080"/><rect x="537.0" y="408.1" width="2" height="1.8" fill="#808080"/><rect x="540.0" y="408.1" width="2" height="1.8" fill="#808080"/><rect x="556.4" y="408.0" width="2" height="2" fill="#777"/><rect x="559.6" y="408.0" width="2" height="2" fill="#777"/><rect x="589.6" y="408.2" width="6" height="1.6" fill="#9a9a9a"/><rect x="621.7" y="408.2" width="6" height="1.6" fill="#9a9a9a"/><rect x="640.7" y="408.1" width="2" height="1.8" fill="#808080"/><rect x="644.5" y="408.1" width="2" height="1.8" fill="#808080"/><rect x="648.2" y="408.1" width="2" height="1.8" fill="#808080"/><rect x="532.5" y="413.2" width="12" height="1.6" fill="#a4a4a4"/><rect x="545.5" y="413.2" width="94" height="1.6" fill="#a4a4a4"/><rect x="640.5" y="413.2" width="11" height="1.6" fill="#a4a4a4"/><rect x="533.5" y="418.3" width="2" height="1.8" fill="#808080"/><rect x="537.0" y="418.3" width="2" height="1.8" fill="#808080"/><rect x="540.0" y="418.3" width="2" height="1.8" fill="#808080"/><rect x="556.0" y="418.4" width="6" height="1.6" fill="#9a9a9a"/><rect x="589.6" y="418.4" width="6" height="1.6" fill="#9a9a9a"/><rect x="622.1" y="418.2" width="2" height="2" fill="#777"/><rect x="625.3" y="418.2" width="2" height="2" fill="#777"/><rect x="640.7" y="418.3" width="2" height="1.8" fill="#808080"/><rect x="644.5" y="418.3" width="2" height="1.8" fill="#808080"/><rect x="648.2" y="418.3" width="2" height="1.8" fill="#808080"/><rect x="532.5" y="423.3" width="12" height="1.6" fill="#a4a4a4"/><rect x="545.5" y="423.3" width="94" height="1.6" fill="#a4a4a4"/><rect x="640.5" y="423.3" width="11" height="1.6" fill="#a4a4a4"/><rect x="533.5" y="428.4" width="2" height="1.8" fill="#808080"/><rect x="537.0" y="428.4" width="2" height="1.8" fill="#808080"/><rect x="540.0" y="428.4" width="2" height="1.8" fill="#808080"/><rect x="556.4" y="428.3" width="2" height="2" fill="#777"/><rect x="559.6" y="428.3" width="2" height="2" fill="#777"/><rect x="589.6" y="428.5" width="6" height="1.6" fill="#9a9a9a"/><rect x="621.7" y="428.5" width="6" height="1.6" fill="#9a9a9a"/><rect x="640.7" y="428.4" width="2" height="1.8" fill="#808080"/><rect x="644.5" y="428.4" width="2" height="1.8" fill="#808080"/><rect x="648.2" y="428.4" width="2" height="1.8" fill="#808080"/><rect x="532.5" y="433.4" width="12" height="1.6" fill="#a4a4a4"/><rect x="545.5" y="433.4" width="94" height="1.6" fill="#a4a4a4"/><rect x="640.5" y="433.4" width="11" height="1.6" fill="#a4a4a4"/><rect x="533.5" y="438.5" width="2" height="1.8" fill="#808080"/><rect x="537.0" y="438.5" width="2" height="1.8" fill="#808080"/><rect x="540.0" y="438.5" width="2" height="1.8" fill="#808080"/><rect x="556.0" y="438.6" width="6" height="1.6" fill="#9a9a9a"/><rect x="589.6" y="438.6" width="6" height="1.6" fill="#9a9a9a"/><rect x="622.1" y="438.4" width="2" height="2" fill="#777"/><rect x="625.3" y="438.4" width="2" height="2" fill="#777"/><rect x="640.7" y="438.5" width="2" height="1.8" fill="#808080"/><rect x="644.5" y="438.5" width="2" height="1.8" fill="#808080"/><rect x="648.2" y="438.5" width="2" height="1.8" fill="#808080"/><rect x="532.5" y="443.5" width="12" height="1.6" fill="#a4a4a4"/><rect x="545.5" y="443.5" width="94" height="1.6" fill="#a4a4a4"/><rect x="640.5" y="443.5" width="11" height="1.6" fill="#a4a4a4"/><rect x="533.5" y="448.6" width="2" height="1.8" fill="#808080"/><rect x="537.0" y="448.6" width="2" height="1.8" fill="#808080"/><rect x="540.0" y="448.6" width="2" height="1.8" fill="#808080"/><rect x="556.4" y="448.5" width="2" height="2" fill="#777"/><rect x="559.6" y="448.5" width="2" height="2" fill="#777"/><rect x="589.6" y="448.7" width="6" height="1.6" fill="#9a9a9a"/><rect x="621.7" y="448.7" width="6" height="1.6" fill="#9a9a9a"/><rect x="640.7" y="448.6" width="2" height="1.8" fill="#808080"/><rect x="644.5" y="448.6" width="2" height="1.8" fill="#808080"/><rect x="648.2" y="448.6" width="2" height="1.8" fill="#808080"/><rect x="532.5" y="453.6" width="12" height="1.6" fill="#a4a4a4"/><rect x="545.5" y="453.6" width="94" height="1.6" fill="#a4a4a4"/><rect x="640.5" y="453.6" width="11" height="1.6" fill="#a4a4a4"/><rect x="533.5" y="458.7" width="2" height="1.8" fill="#808080"/><rect x="537.0" y="458.7" width="2" height="1.8" fill="#808080"/><rect x="540.0" y="458.7" width="2" height="1.8" fill="#808080"/><rect x="556.0" y="458.8" width="6" height="1.6" fill="#9a9a9a"/><rect x="589.6" y="458.8" width="6" height="1.6" fill="#9a9a9a"/><rect x="622.1" y="458.6" width="2" height="2" fill="#777"/><rect x="625.3" y="458.6" width="2" height="2" fill="#777"/><rect x="640.7" y="458.7" width="2" height="1.8" fill="#808080"/><rect x="644.5" y="458.7" width="2" height="1.8" fill="#808080"/><rect x="648.2" y="458.7" width="2" height="1.8" fill="#808080"/><rect x="532.5" y="463.8" width="12" height="1.6" fill="#a4a4a4"/><rect x="545.5" y="463.8" width="94" height="1.6" fill="#a4a4a4"/><rect x="640.5" y="463.8" width="11" height="1.6" fill="#a4a4a4"/><rect x="533.5" y="468.9" width="2" height="1.8" fill="#808080"/><rect x="537.0" y="468.9" width="2" height="1.8" fill="#808080"/><rect x="540.0" y="468.9" width="2" height="1.8" fill="#808080"/><rect x="556.4" y="468.8" width="2" height="2" fill="#777"/><rect x="559.6" y="468.8" width="2" height="2" fill="#777"/><rect x="589.6" y="469.0" width="6" height="1.6" fill="#9a9a9a"/><rect x="621.7" y="469.0" width="6" height="1.6" fill="#9a9a9a"/><rect x="640.7" y="468.9" width="2" height="1.8" fill="#808080"/><rect x="644.5" y="468.9" width="2" height="1.8" fill="#808080"/><rect x="648.2" y="468.9" width="2" height="1.8" fill="#808080"/><rect x="532.5" y="473.9" width="12" height="1.6" fill="#a4a4a4"/><rect x="545.5" y="473.9" width="94" height="1.6" fill="#a4a4a4"/><rect x="640.5" y="473.9" width="11" height="1.6" fill="#a4a4a4"/><rect x="533.5" y="479.0" width="2" height="1.8" fill="#808080"/><rect x="537.0" y="479.0" width="2" height="1.8" fill="#808080"/><rect x="540.0" y="479.0" width="2" height="1.8" fill="#808080"/><rect x="556.0" y="479.1" width="6" height="1.6" fill="#9a9a9a"/><rect x="589.6" y="479.1" width="6" height="1.6" fill="#9a9a9a"/><rect x="622.1" y="478.9" width="2" height="2" fill="#777"/><rect x="625.3" y="478.9" width="2" height="2" fill="#777"/><rect x="640.7" y="479.0" width="2" height="1.8" fill="#808080"/><rect x="644.5" y="479.0" width="2" height="1.8" fill="#808080"/><rect x="648.2" y="479.0" width="2" height="1.8" fill="#808080"/><rect x="532.5" y="484.0" width="12" height="1.6" fill="#a4a4a4"/><rect x="545.5" y="484.0" width="94" height="1.6" fill="#a4a4a4"/><rect x="640.5" y="484.0" width="11" height="1.6" fill="#a4a4a4"/><rect x="533.5" y="489.1" width="2" height="1.8" fill="#808080"/><rect x="537.0" y="489.1" width="2" height="1.8" fill="#808080"/><rect x="540.0" y="489.1" width="2" height="1.8" fill="#808080"/><rect x="556.4" y="489.0" width="2" height="2" fill="#777"/><rect x="559.6" y="489.0" width="2" height="2" fill="#777"/><rect x="589.6" y="489.2" width="6" height="1.6" fill="#9a9a9a"/><rect x="621.7" y="489.2" width="6" height="1.6" fill="#9a9a9a"/><rect x="640.7" y="489.1" width="2" height="1.8" fill="#808080"/><rect x="644.5" y="489.1" width="2" height="1.8" fill="#808080"/><rect x="648.2" y="489.1" width="2" height="1.8" fill="#808080"/><rect x="532.5" y="494.1" width="12" height="1.6" fill="#a4a4a4"/><rect x="545.5" y="494.1" width="94" height="1.6" fill="#a4a4a4"/><rect x="640.5" y="494.1" width="11" height="1.6" fill="#a4a4a4"/><rect x="532.5" y="494.1" width="107" height="1.6" fill="#a4a4a4"/><rect x="640.5" y="494.1" width="11" height="1.6" fill="#a4a4a4"/><rect x="546.4" y="499.1" width="2" height="2" fill="#777"/><rect x="549.6" y="499.1" width="2" height="2" fill="#777"/><rect x="583.0" y="499.3" width="6" height="1.6" fill="#9a9a9a"/><rect x="620.0" y="499.3" width="6" height="1.6" fill="#9a9a9a"/><rect x="640.7" y="499.2" width="2" height="1.8" fill="#808080"/><rect x="644.5" y="499.2" width="2" height="1.8" fill="#808080"/><rect x="648.0" y="499.2" width="2" height="1.8" fill="#808080"/><rect x="532.5" y="504.2" width="107" height="1.6" fill="#a4a4a4"/><rect x="640.5" y="504.2" width="11" height="1.6" fill="#a4a4a4"/><rect x="546.0" y="509.4" width="6" height="1.6" fill="#9a9a9a"/><rect x="583.0" y="509.4" width="6" height="1.6" fill="#9a9a9a"/><rect x="620.4" y="509.2" width="2" height="2" fill="#777"/><rect x="623.6" y="509.2" width="2" height="2" fill="#777"/><rect x="640.7" y="509.3" width="2" height="1.8" fill="#808080"/><rect x="644.5" y="509.3" width="2" height="1.8" fill="#808080"/><rect x="648.0" y="509.3" width="2" height="1.8" fill="#808080"/><rect x="532.5" y="514.4" width="107" height="1.6" fill="#a4a4a4"/><rect x="640.5" y="514.4" width="11" height="1.6" fill="#a4a4a4"/><rect x="546.4" y="519.4" width="2" height="2" fill="#777"/><rect x="549.6" y="519.4" width="2" height="2" fill="#777"/><rect x="583.0" y="519.6" width="6" height="1.6" fill="#9a9a9a"/><rect x="620.0" y="519.6" width="6" height="1.6" fill="#9a9a9a"/><rect x="640.7" y="519.5" width="2" height="1.8" fill="#808080"/><rect x="644.5" y="519.5" width="2" height="1.8" fill="#808080"/><rect x="648.0" y="519.5" width="2" height="1.8" fill="#808080"/><rect x="532.5" y="524.5" width="107" height="1.6" fill="#a4a4a4"/><rect x="640.5" y="524.5" width="11" height="1.6" fill="#a4a4a4"/><rect x="546.0" y="529.7" width="6" height="1.6" fill="#9a9a9a"/><rect x="583.0" y="529.7" width="6" height="1.6" fill="#9a9a9a"/><rect x="620.4" y="529.5" width="2" height="2" fill="#777"/><rect x="623.6" y="529.5" width="2" height="2" fill="#777"/><rect x="640.7" y="529.6" width="2" height="1.8" fill="#808080"/><rect x="644.5" y="529.6" width="2" height="1.8" fill="#808080"/><rect x="648.0" y="529.6" width="2" height="1.8" fill="#808080"/><rect x="532.5" y="534.6" width="107" height="1.6" fill="#a4a4a4"/><rect x="640.5" y="534.6" width="11" height="1.6" fill="#a4a4a4"/><rect x="546.4" y="539.6" width="2" height="2" fill="#777"/><rect x="549.6" y="539.6" width="2" height="2" fill="#777"/><rect x="583.0" y="539.8" width="6" height="1.6" fill="#9a9a9a"/><rect x="620.0" y="539.8" width="6" height="1.6" fill="#9a9a9a"/><rect x="640.7" y="539.7" width="2" height="1.8" fill="#808080"/><rect x="644.5" y="539.7" width="2" height="1.8" fill="#808080"/><rect x="648.0" y="539.7" width="2" height="1.8" fill="#808080"/><rect x="532.5" y="544.7" width="107" height="1.6" fill="#a4a4a4"/><rect x="640.5" y="544.7" width="11" height="1.6" fill="#a4a4a4"/><rect x="546.0" y="549.9" width="6" height="1.6" fill="#9a9a9a"/><rect x="583.0" y="549.9" width="6" height="1.6" fill="#9a9a9a"/><rect x="620.4" y="549.7" width="2" height="2" fill="#777"/><rect x="623.6" y="549.7" width="2" height="2" fill="#777"/><rect x="640.7" y="549.8" width="2" height="1.8" fill="#808080"/><rect x="644.5" y="549.8" width="2" height="1.8" fill="#808080"/><rect x="648.0" y="549.8" width="2" height="1.8" fill="#808080"/><rect x="532.5" y="554.8" width="107" height="1.6" fill="#a4a4a4"/><rect x="640.5" y="554.8" width="11" height="1.6" fill="#a4a4a4"/><rect x="546.4" y="559.8" width="2" height="2" fill="#777"/><rect x="549.6" y="559.8" width="2" height="2" fill="#777"/><rect x="583.0" y="560.0" width="6" height="1.6" fill="#9a9a9a"/><rect x="620.0" y="560.0" width="6" height="1.6" fill="#9a9a9a"/><rect x="640.7" y="559.9" width="2" height="1.8" fill="#808080"/><rect x="644.5" y="559.9" width="2" height="1.8" fill="#808080"/><rect x="648.0" y="559.9" width="2" height="1.8" fill="#808080"/><rect x="532.5" y="565.0" width="107" height="1.6" fill="#a4a4a4"/><rect x="640.5" y="565.0" width="11" height="1.6" fill="#a4a4a4"/><rect x="546.0" y="570.2" width="6" height="1.6" fill="#9a9a9a"/><rect x="583.0" y="570.2" width="6" height="1.6" fill="#9a9a9a"/><rect x="620.4" y="570.0" width="2" height="2" fill="#777"/><rect x="623.6" y="570.0" width="2" height="2" fill="#777"/><rect x="640.7" y="570.1" width="2" height="1.8" fill="#808080"/><rect x="644.5" y="570.1" width="2" height="1.8" fill="#808080"/><rect x="648.0" y="570.1" width="2" height="1.8" fill="#808080"/><rect x="532.5" y="575.1" width="107" height="1.6" fill="#a4a4a4"/><rect x="640.5" y="575.1" width="11" height="1.6" fill="#a4a4a4"/><rect x="546.4" y="580.1" width="2" height="2" fill="#777"/><rect x="549.6" y="580.1" width="2" height="2" fill="#777"/><rect x="583.0" y="580.3" width="6" height="1.6" fill="#9a9a9a"/><rect x="620.0" y="580.3" width="6" height="1.6" fill="#9a9a9a"/><rect x="640.7" y="580.2" width="2" height="1.8" fill="#808080"/><rect x="644.5" y="580.2" width="2" height="1.8" fill="#808080"/><rect x="648.0" y="580.2" width="2" height="1.8" fill="#808080"/><rect x="532.5" y="585.2" width="107" height="1.6" fill="#a4a4a4"/><rect x="640.5" y="585.2" width="11" height="1.6" fill="#a4a4a4"/><rect x="546.0" y="590.4" width="6" height="1.6" fill="#9a9a9a"/><rect x="583.0" y="590.4" width="6" height="1.6" fill="#9a9a9a"/><rect x="620.4" y="590.2" width="2" height="2" fill="#777"/><rect x="623.6" y="590.2" width="2" height="2" fill="#777"/><rect x="640.7" y="590.3" width="2" height="1.8" fill="#808080"/><rect x="644.5" y="590.3" width="2" height="1.8" fill="#808080"/><rect x="648.0" y="590.3" width="2" height="1.8" fill="#808080"/><rect x="532.5" y="595.3" width="107" height="1.6" fill="#a4a4a4"/><rect x="640.5" y="595.3" width="11" height="1.6" fill="#a4a4a4"/><rect x="546.4" y="600.3" width="2" height="2" fill="#777"/><rect x="549.6" y="600.3" width="2" height="2" fill="#777"/><rect x="583.0" y="600.5" width="6" height="1.6" fill="#9a9a9a"/><rect x="620.0" y="600.5" width="6" height="1.6" fill="#9a9a9a"/><rect x="640.7" y="600.4" width="2" height="1.8" fill="#808080"/><rect x="644.5" y="600.4" width="2" height="1.8" fill="#808080"/><rect x="648.0" y="600.4" width="2" height="1.8" fill="#808080"/><rect x="532.5" y="605.4" width="107" height="1.6" fill="#a4a4a4"/><rect x="640.5" y="605.4" width="11" height="1.6" fill="#a4a4a4"/></svg>
<svg style="left:653px;top:179px" width="108" height="428" viewBox="653 179 108 428"><defs><filter id="hl0" color-interpolation-filters="sRGB" x="0" y="0" width="100%" height="100%"><feTurbulence type="fractalNoise" baseFrequency="0.38" numOctaves="2" seed="3"/><feColorMatrix type="matrix" values="0 0 0 0 1  0 0 0 0 1  0 0 0 0 1  4 0 0 0 -2.0"/><feGaussianBlur stdDeviation="0.35" result="b"/><feComposite in="SourceGraphic" in2="b" operator="in"/></filter><filter id="dk0" color-interpolation-filters="sRGB" x="0" y="0" width="100%" height="100%"><feTurbulence type="fractalNoise" baseFrequency="0.38" numOctaves="2" seed="3"/><feColorMatrix type="matrix" values="0 0 0 0 1  0 0 0 0 1  0 0 0 0 1  -4 0 0 0 2.0"/><feGaussianBlur stdDeviation="0.35" result="b"/><feComposite in="SourceGraphic" in2="b" operator="in"/></filter><filter id="hl1" color-interpolation-filters="sRGB" x="0" y="0" width="100%" height="100%"><feTurbulence type="fractalNoise" baseFrequency="0.38" numOctaves="2" seed="14"/><feColorMatrix type="matrix" values="0 0 0 0 1  0 0 0 0 1  0 0 0 0 1  4 0 0 0 -2.0"/><feGaussianBlur stdDeviation="0.35" result="b"/><feComposite in="SourceGraphic" in2="b" operator="in"/></filter><filter id="dk1" color-interpolation-filters="sRGB" x="0" y="0" width="100%" height="100%"><feTurbulence type="fractalNoise" baseFrequency="0.38" numOctaves="2" seed="14"/><feColorMatrix type="matrix" values="0 0 0 0 1  0 0 0 0 1  0 0 0 0 1  -4 0 0 0 2.0"/><feGaussianBlur stdDeviation="0.35" result="b"/><feComposite in="SourceGraphic" in2="b" operator="in"/></filter><filter id="hl2" color-interpolation-filters="sRGB" x="0" y="0" width="100%" height="100%"><feTurbulence type="fractalNoise" baseFrequency="0.38" numOctaves="2" seed="25"/><feColorMatrix type="matrix" values="0 0 0 0 1  0 0 0 0 1  0 0 0 0 1  4 0 0 0 -2.0"/><feGaussianBlur stdDeviation="0.35" result="b"/><feComposite in="SourceGraphic" in2="b" operator="in"/></filter><filter id="dk2" color-interpolation-filters="sRGB" x="0" y="0" width="100%" height="100%"><feTurbulence type="fractalNoise" baseFrequency="0.38" numOctaves="2" seed="25"/><feColorMatrix type="matrix" values="0 0 0 0 1  0 0 0 0 1  0 0 0 0 1  -4 0 0 0 2.0"/><feGaussianBlur stdDeviation="0.35" result="b"/><feComposite in="SourceGraphic" in2="b" operator="in"/></filter><filter id="hl3" color-interpolation-filters="sRGB" x="0" y="0" width="100%" height="100%"><feTurbulence type="fractalNoise" baseFrequency="0.38" numOctaves="2" seed="36"/><feColorMatrix type="matrix" values="0 0 0 0 1  0 0 0 0 1  0 0 0 0 1  4 0 0 0 -2.0"/><feGaussianBlur stdDeviation="0.35" result="b"/><feComposite in="SourceGraphic" in2="b" operator="in"/></filter><filter id="dk3" color-interpolation-filters="sRGB" x="0" y="0" width="100%" height="100%"><feTurbulence type="fractalNoise" baseFrequency="0.38" numOctaves="2" seed="36"/><feColorMatrix type="matrix" values="0 0 0 0 1  0 0 0 0 1  0 0 0 0 1  -4 0 0 0 2.0"/><feGaussianBlur stdDeviation="0.35" result="b"/><feComposite in="SourceGraphic" in2="b" operator="in"/></filter></defs><rect x="653" y="179" width="108" height="52" fill="#606656"/><rect x="653" y="179" width="108" height="52" fill="#acb29a" filter="url(#hl0)" opacity="0.6"/><rect x="653" y="179" width="108" height="52" fill="#1c1e16" filter="url(#dk0)" opacity="0.6"/><rect x="653" y="231" width="108" height="132" fill="#484c40"/><rect x="653" y="231" width="108" height="132" fill="#9ca088" filter="url(#hl1)" opacity="0.6"/><rect x="653" y="231" width="108" height="132" fill="#10120c" filter="url(#dk1)" opacity="0.6"/><rect x="653" y="363" width="108" height="131" fill="#968c62"/><rect x="653" y="363" width="108" height="131" fill="#dccc9c" filter="url(#hl2)" opacity="0.6"/><rect x="653" y="363" width="108" height="131" fill="#463c22" filter="url(#dk2)" opacity="0.6"/><rect x="653" y="494" width="108" height="113" fill="#4c4a3e"/><rect x="653" y="494" width="108" height="113" fill="#9e967c" filter="url(#hl3)" opacity="0.6"/><rect x="653" y="494" width="108" height="113" fill="#14110a" filter="url(#dk3)" opacity="0.6"/><rect x="653" y="230.3" width="108" height="1" fill="#b04a28"/><rect x="653" y="362.3" width="108" height="1" fill="#b04a28"/><rect x="653" y="493.3" width="108" height="1" fill="#b04a28"/><text x="726" y="221" font-size="5.5" fill="#e06818" font-family="Liberation Sans" letter-spacing="0.3">27.92 27</text><text x="726" y="350" font-size="5.5" fill="#e06818" font-family="Liberation Sans" letter-spacing="0.3">27.92 27</text><text x="726" y="484" font-size="5.5" fill="#e06818" font-family="Liberation Sans" letter-spacing="0.3">27.92 27</text></svg>
<svg style="left:761px;top:179px" width="94" height="428" viewBox="761 179 94 428"><rect x="762" y="179.0" width="30" height="32.4" fill="#fff"/><rect x="762" y="179.0" width="30" height="1.5" fill="#a0a0a0"/><rect x="765" y="184.2" width="4" height="1.4" fill="#888"/><rect x="775" y="184.2" width="4" height="1.4" fill="#888"/><rect x="785" y="184.2" width="4" height="1.4" fill="#888"/><rect x="762" y="189.8" width="30" height="1.5" fill="#a0a0a0"/><rect x="765" y="195.0" width="4" height="1.4" fill="#888"/><rect x="775" y="195.0" width="4" height="1.4" fill="#888"/><rect x="785" y="195.0" width="4" height="1.4" fill="#888"/><rect x="762" y="200.6" width="30" height="1.5" fill="#a0a0a0"/><rect x="765" y="205.8" width="4" height="1.4" fill="#888"/><rect x="775" y="205.8" width="4" height="1.4" fill="#888"/><rect x="785" y="205.8" width="4" height="1.4" fill="#888"/><rect x="762" y="211.4" width="15" height="26.2" fill="#fff"/><rect x="762" y="211.4" width="15" height="1.5" fill="#a0a0a0"/><rect x="764" y="215.5" width="2" height="1.6" fill="#777"/><rect x="769" y="215.5" width="2" height="1.6" fill="#777"/><rect x="774" y="215.5" width="2" height="1.6" fill="#777"/><rect x="762" y="220.1" width="15" height="1.5" fill="#a0a0a0"/><rect x="764" y="224.2" width="2" height="1.6" fill="#777"/><rect x="769" y="224.2" width="2" height="1.6" fill="#777"/><rect x="774" y="224.2" width="2" height="1.6" fill="#777"/><rect x="762" y="228.9" width="15" height="1.5" fill="#a0a0a0"/><rect x="764" y="232.9" width="2" height="1.6" fill="#777"/><rect x="769" y="232.9" width="2" height="1.6" fill="#777"/><rect x="774" y="232.9" width="2" height="1.6" fill="#777"/><rect x="762" y="237.6" width="61" height="41.4" fill="#fff"/><rect x="762" y="237.6" width="61" height="1.5" fill="#a0a0a0"/><rect x="776.5" y="242.3" width="2.2" height="2" fill="#505050"/><rect x="779.3" y="242.3" width="2.2" height="2" fill="#505050"/><rect x="793.5" y="242.3" width="2.2" height="2" fill="#505050"/><rect x="796.3" y="242.3" width="2.2" height="2" fill="#505050"/><rect x="808.5" y="242.3" width="2.2" height="2" fill="#505050"/><rect x="811.3" y="242.3" width="2.2" height="2" fill="#505050"/><rect x="762" y="247.9" width="61" height="1.5" fill="#a0a0a0"/><rect x="776.5" y="252.6" width="2.2" height="2" fill="#505050"/><rect x="779.3" y="252.6" width="2.2" height="2" fill="#505050"/><rect x="793.5" y="252.6" width="2.2" height="2" fill="#505050"/><rect x="796.3" y="252.6" width="2.2" height="2" fill="#505050"/><rect x="808.5" y="252.6" width="2.2" height="2" fill="#505050"/><rect x="811.3" y="252.6" width="2.2" height="2" fill="#505050"/><rect x="762" y="258.3" width="61" height="1.5" fill="#a0a0a0"/><rect x="776.5" y="263.0" width="2.2" height="2" fill="#505050"/><rect x="779.3" y="263.0" width="2.2" height="2" fill="#505050"/><rect x="793.5" y="263.0" width="2.2" height="2" fill="#505050"/><rect x="796.3" y="263.0" width="2.2" height="2" fill="#505050"/><rect x="808.5" y="263.0" width="2.2" height="2" fill="#505050"/><rect x="811.3" y="263.0" width="2.2" height="2" fill="#505050"/><rect x="762" y="268.6" width="61" height="1.5" fill="#a0a0a0"/><rect x="776.5" y="273.3" width="2.2" height="2" fill="#505050"/><rect x="779.3" y="273.3" width="2.2" height="2" fill="#505050"/><rect x="793.5" y="273.3" width="2.2" height="2" fill="#505050"/><rect x="796.3" y="273.3" width="2.2" height="2" fill="#505050"/><rect x="808.5" y="273.3" width="2.2" height="2" fill="#505050"/><rect x="811.3" y="273.3" width="2.2" height="2" fill="#505050"/><rect x="762" y="279.0" width="30" height="52.0" fill="#fff"/><rect x="762" y="279.0" width="30" height="1.5" fill="#a0a0a0"/><rect x="765" y="284.0" width="4" height="1.4" fill="#888"/><rect x="775" y="284.0" width="4" height="1.4" fill="#888"/><rect x="785" y="284.0" width="4" height="1.4" fill="#888"/><rect x="762" y="289.4" width="30" height="1.5" fill="#a0a0a0"/><rect x="765" y="294.4" width="4" height="1.4" fill="#888"/><rect x="775" y="294.4" width="4" height="1.4" fill="#888"/><rect x="785" y="294.4" width="4" height="1.4" fill="#888"/><rect x="762" y="299.8" width="30" height="1.5" fill="#a0a0a0"/><rect x="765" y="304.8" width="4" height="1.4" fill="#888"/><rect x="775" y="304.8" width="4" height="1.4" fill="#888"/><rect x="785" y="304.8" width="4" height="1.4" fill="#888"/><rect x="762" y="310.2" width="30" height="1.5" fill="#a0a0a0"/><rect x="765" y="315.2" width="4" height="1.4" fill="#888"/><rect x="775" y="315.2" width="4" height="1.4" fill="#888"/><rect x="785" y="315.2" width="4" height="1.4" fill="#888"/><rect x="762" y="320.6" width="30" height="1.5" fill="#a0a0a0"/><rect x="765" y="325.6" width="4" height="1.4" fill="#888"/><rect x="775" y="325.6" width="4" height="1.4" fill="#888"/><rect x="785" y="325.6" width="4" height="1.4" fill="#888"/><rect x="762" y="331.0" width="15" height="22.0" fill="#fff"/><rect x="762" y="331.0" width="15" height="1.5" fill="#a0a0a0"/><rect x="764" y="336.2" width="2" height="1.6" fill="#777"/><rect x="769" y="336.2" width="2" height="1.6" fill="#777"/><rect x="774" y="336.2" width="2" height="1.6" fill="#777"/><rect x="762" y="342.0" width="15" height="1.5" fill="#a0a0a0"/><rect x="764" y="347.2" width="2" height="1.6" fill="#777"/><rect x="769" y="347.2" width="2" height="1.6" fill="#777"/><rect x="774" y="347.2" width="2" height="1.6" fill="#777"/><rect x="762" y="353.0" width="61" height="18.2" fill="#fff"/><rect x="762" y="353.0" width="61" height="1.5" fill="#a0a0a0"/><rect x="776.5" y="357.1" width="2.2" height="2" fill="#505050"/><rect x="779.3" y="357.1" width="2.2" height="2" fill="#505050"/><rect x="793.5" y="357.1" width="2.2" height="2" fill="#505050"/><rect x="796.3" y="357.1" width="2.2" height="2" fill="#505050"/><rect x="808.5" y="357.1" width="2.2" height="2" fill="#505050"/><rect x="811.3" y="357.1" width="2.2" height="2" fill="#505050"/><rect x="762" y="362.1" width="61" height="1.5" fill="#a0a0a0"/><rect x="776.5" y="366.2" width="2.2" height="2" fill="#505050"/><rect x="779.3" y="366.2" width="2.2" height="2" fill="#505050"/><rect x="793.5" y="366.2" width="2.2" height="2" fill="#505050"/><rect x="796.3" y="366.2" width="2.2" height="2" fill="#505050"/><rect x="808.5" y="366.2" width="2.2" height="2" fill="#505050"/><rect x="811.3" y="366.2" width="2.2" height="2" fill="#505050"/><rect x="762" y="371.2" width="30" height="51.3" fill="#fff"/><rect x="762" y="371.2" width="30" height="1.5" fill="#a0a0a0"/><rect x="765" y="376.1" width="4" height="1.4" fill="#888"/><rect x="775" y="376.1" width="4" height="1.4" fill="#888"/><rect x="785" y="376.1" width="4" height="1.4" fill="#888"/><rect x="762" y="381.5" width="30" height="1.5" fill="#a0a0a0"/><rect x="765" y="386.4" width="4" height="1.4" fill="#888"/><rect x="775" y="386.4" width="4" height="1.4" fill="#888"/><rect x="785" y="386.4" width="4" height="1.4" fill="#888"/><rect x="762" y="391.7" width="30" height="1.5" fill="#a0a0a0"/><rect x="765" y="396.6" width="4" height="1.4" fill="#888"/><rect x="775" y="396.6" width="4" height="1.4" fill="#888"/><rect x="785" y="396.6" width="4" height="1.4" fill="#888"/><rect x="762" y="402.0" width="30" height="1.5" fill="#a0a0a0"/><rect x="765" y="406.9" width="4" height="1.4" fill="#888"/><rect x="775" y="406.9" width="4" height="1.4" fill="#888"/><rect x="785" y="406.9" width="4" height="1.4" fill="#888"/><rect x="762" y="412.2" width="30" height="1.5" fill="#a0a0a0"/><rect x="765" y="417.2" width="4" height="1.4" fill="#888"/><rect x="775" y="417.2" width="4" height="1.4" fill="#888"/><rect x="785" y="417.2" width="4" height="1.4" fill="#888"/><rect x="762" y="422.5" width="15" height="14.5" fill="#fff"/><rect x="762" y="422.5" width="15" height="1.5" fill="#a0a0a0"/><rect x="764" y="429.4" width="2" height="1.6" fill="#777"/><rect x="769" y="429.4" width="2" height="1.6" fill="#777"/><rect x="774" y="429.4" width="2" height="1.6" fill="#777"/><rect x="762" y="437.0" width="61" height="19.7" fill="#fff"/><rect x="762" y="437.0" width="61" height="1.5" fill="#a0a0a0"/><rect x="776.5" y="441.4" width="2.2" height="2" fill="#505050"/><rect x="779.3" y="441.4" width="2.2" height="2" fill="#505050"/><rect x="793.5" y="441.4" width="2.2" height="2" fill="#505050"/><rect x="796.3" y="441.4" width="2.2" height="2" fill="#505050"/><rect x="808.5" y="441.4" width="2.2" height="2" fill="#505050"/><rect x="811.3" y="441.4" width="2.2" height="2" fill="#505050"/><rect x="762" y="446.9" width="61" height="1.5" fill="#a0a0a0"/><rect x="776.5" y="451.3" width="2.2" height="2" fill="#505050"/><rect x="779.3" y="451.3" width="2.2" height="2" fill="#505050"/><rect x="793.5" y="451.3" width="2.2" height="2" fill="#505050"/><rect x="796.3" y="451.3" width="2.2" height="2" fill="#505050"/><rect x="808.5" y="451.3" width="2.2" height="2" fill="#505050"/><rect x="811.3" y="451.3" width="2.2" height="2" fill="#505050"/><rect x="762" y="456.7" width="30" height="40.8" fill="#fff"/><rect x="762" y="456.7" width="30" height="1.5" fill="#a0a0a0"/><rect x="765" y="461.6" width="4" height="1.4" fill="#888"/><rect x="775" y="461.6" width="4" height="1.4" fill="#888"/><rect x="785" y="461.6" width="4" height="1.4" fill="#888"/><rect x="762" y="466.9" width="30" height="1.5" fill="#a0a0a0"/><rect x="765" y="471.8" width="4" height="1.4" fill="#888"/><rect x="775" y="471.8" width="4" height="1.4" fill="#888"/><rect x="785" y="471.8" width="4" height="1.4" fill="#888"/><rect x="762" y="477.1" width="30" height="1.5" fill="#a0a0a0"/><rect x="765" y="482.0" width="4" height="1.4" fill="#888"/><rect x="775" y="482.0" width="4" height="1.4" fill="#888"/><rect x="785" y="482.0" width="4" height="1.4" fill="#888"/><rect x="762" y="487.3" width="30" height="1.5" fill="#a0a0a0"/><rect x="765" y="492.2" width="4" height="1.4" fill="#888"/><rect x="775" y="492.2" width="4" height="1.4" fill="#888"/><rect x="785" y="492.2" width="4" height="1.4" fill="#888"/><rect x="762" y="497.5" width="15" height="13.3" fill="#fff"/><rect x="762" y="497.5" width="15" height="1.5" fill="#a0a0a0"/><rect x="764" y="503.8" width="2" height="1.6" fill="#777"/><rect x="769" y="503.8" width="2" height="1.6" fill="#777"/><rect x="774" y="503.8" width="2" height="1.6" fill="#777"/><rect x="762" y="510.8" width="30" height="40.0" fill="#fff"/><rect x="762" y="510.8" width="30" height="1.5" fill="#a0a0a0"/><rect x="765" y="515.6" width="4" height="1.4" fill="#888"/><rect x="775" y="515.6" width="4" height="1.4" fill="#888"/><rect x="785" y="515.6" width="4" height="1.4" fill="#888"/><rect x="762" y="520.8" width="30" height="1.5" fill="#a0a0a0"/><rect x="765" y="525.6" width="4" height="1.4" fill="#888"/><rect x="775" y="525.6" width="4" height="1.4" fill="#888"/><rect x="785" y="525.6" width="4" height="1.4" fill="#888"/><rect x="762" y="530.8" width="30" height="1.5" fill="#a0a0a0"/><rect x="765" y="535.6" width="4" height="1.4" fill="#888"/><rect x="775" y="535.6" width="4" height="1.4" fill="#888"/><rect x="785" y="535.6" width="4" height="1.4" fill="#888"/><rect x="762" y="540.8" width="30" height="1.5" fill="#a0a0a0"/><rect x="765" y="545.6" width="4" height="1.4" fill="#888"/><rect x="775" y="545.6" width="4" height="1.4" fill="#888"/><rect x="785" y="545.6" width="4" height="1.4" fill="#888"/><rect x="762" y="550.8" width="15" height="17.5" fill="#fff"/><rect x="762" y="550.8" width="15" height="1.5" fill="#a0a0a0"/><rect x="764" y="554.9" width="2" height="1.6" fill="#777"/><rect x="769" y="554.9" width="2" height="1.6" fill="#777"/><rect x="774" y="554.9" width="2" height="1.6" fill="#777"/><rect x="762" y="559.5" width="15" height="1.5" fill="#a0a0a0"/><rect x="764" y="563.6" width="2" height="1.6" fill="#777"/><rect x="769" y="563.6" width="2" height="1.6" fill="#777"/><rect x="774" y="563.6" width="2" height="1.6" fill="#777"/><rect x="762" y="568.3" width="30" height="38.4" fill="#fff"/><rect x="762" y="568.3" width="30" height="1.5" fill="#a0a0a0"/><rect x="765" y="572.9" width="4" height="1.4" fill="#888"/><rect x="775" y="572.9" width="4" height="1.4" fill="#888"/><rect x="785" y="572.9" width="4" height="1.4" fill="#888"/><rect x="762" y="577.9" width="30" height="1.5" fill="#a0a0a0"/><rect x="765" y="582.5" width="4" height="1.4" fill="#888"/><rect x="775" y="582.5" width="4" height="1.4" fill="#888"/><rect x="785" y="582.5" width="4" height="1.4" fill="#888"/><rect x="762" y="587.5" width="30" height="1.5" fill="#a0a0a0"/><rect x="765" y="592.1" width="4" height="1.4" fill="#888"/><rect x="775" y="592.1" width="4" height="1.4" fill="#888"/><rect x="785" y="592.1" width="4" height="1.4" fill="#888"/><rect x="762" y="597.1" width="30" height="1.5" fill="#a0a0a0"/><rect x="765" y="601.7" width="4" height="1.4" fill="#888"/><rect x="775" y="601.7" width="4" height="1.4" fill="#888"/><rect x="785" y="601.7" width="4" height="1.4" fill="#888"/></svg>
<div class="desc" style="top:179.8px">粉砂质分布不均；性较硬，吸水性、可塑性中等。岩屑呈块状，少量碎块状。具PDC钻头切削</div>
<div class="desc" style="top:198.3px">特征。</div>
<div class="desc" style="top:247.8px">富含灰质（碳酸钙含量21～23%）；性较硬，吸水性、可塑性中等。岩屑呈块状，少量碎块状</div>
<div class="desc" style="top:267.2px">。具PDC钻头切削特征。</div>
<div class="desc" style="top:306.3px">泥质分布不均；泥质胶结，中等。岩屑呈块状，少量豆粒状。具PDC钻头切削特征。</div>
<div class="desc" style="top:337.6px">性较硬，吸水性、可塑性中等。岩屑呈碎块状，少量块状。</div>
<div class="desc" style="top:392.8px">泥质分布较均；泥质胶结，中等。岩屑呈块状，少量豆粒状。具PDC钻头切削特征。</div>
<div class="desc" style="top:426.8px">泥质胶结，中等。岩屑呈块状及豆粒状。具PDC钻头切削特征。</div>
<div class="desc" style="top:473.5px">泥质分布不均；泥质胶结，中等。岩屑呈块状，少量豆粒状。具PDC钻头切削特征。</div>
<div class="desc" style="top:501.6px">富含灰质（碳酸钙含量21%）；性较硬，吸水性、可塑性中等。岩屑呈碎块状，少量块状。</div>
<div class="desc" style="top:528.3px">泥质分布较均；泥质胶结，中等。岩屑呈块状，少量豆粒状。具PDC钻头切削特征。</div>
<div class="desc" style="top:556.4px">富含灰质（碳酸钙含量21%）；性较硬，吸水性、可塑性中等。岩屑呈碎块状，少量</div>
<div class="desc" style="top:587.4px">泥质分布较均；泥灰质胶结（碳酸钙含量18%），中等。岩屑呈块状，少量豆粒状。具PDC钻头</div>
<div class="desc" style="top:599.8px">切削特征。</div>
<div style="left:1207px;top:555px;width:50px;height:13px;background:#3a8a68;border-radius:6px;opacity:.85;overflow:hidden"><span style="left:4px;top:0;font-size:8.6px;line-height:13px;color:#0a2a20;font-family:'Liberation Mono',monospace;white-space:nowrap">retfwtrey</span></div>
<div style="left:1254px;top:97px;width:13px;height:508px;background:linear-gradient(90deg,#0b3672,#15508e 50%,#0b3672)"></div>
<div style="left:1254px;top:97px;width:13px;height:13px;background:#18b4e4"></div>
<svg style="left:1257.5px;top:102px" width="8" height="4.5" viewBox="0 0 8 4.5"><path d="M0 4.5 L4 0 L8 4.5 Z" fill="#fff"/></svg>
<div style="left:1254px;top:135px;width:13px;height:12px;background:#18b4e4"></div>
<div style="left:1254px;top:593px;width:13px;height:12px;background:#18b4e4"></div>
<svg style="left:1258.5px;top:599px" width="7.5" height="4" viewBox="0 0 7.5 4"><path d="M0 0 L3.75 4 L7.5 0 Z" fill="#fff"/></svg>
<div style="left:1254px;top:605px;width:13px;height:15px;background:#092650"></div>
<div style="left:289px;top:607px;width:964px;height:13px;background:linear-gradient(180deg,#0b3672,#15508e 50%,#0b3672)"></div>
<div style="left:289px;top:607px;width:877px;height:13px;background:#18b4e4"></div>
<div style="left:1240px;top:607px;width:13px;height:13px;background:#18b4e4"></div>
<svg style="left:1245.5px;top:610.5px" width="5" height="8" viewBox="0 0 5 8"><path d="M0 0 L5 4 L0 8 Z" fill="#fff"/></svg>
<div style="left:290px;top:607px;width:13px;height:13px;background:#2cc0ec"></div>
<svg style="left:293px;top:609px" width="6" height="9" viewBox="0 0 6 9"><path d="M6 0 L0 4.5 L6 9 Z" fill="#fff"/></svg>
<svg style="left:147px;top:314px" width="8" height="10" viewBox="0 0 8 10"><path d="M8 0 V10 L0 5 Z" fill="#f4f6fa"/></svg>
</body></html>
